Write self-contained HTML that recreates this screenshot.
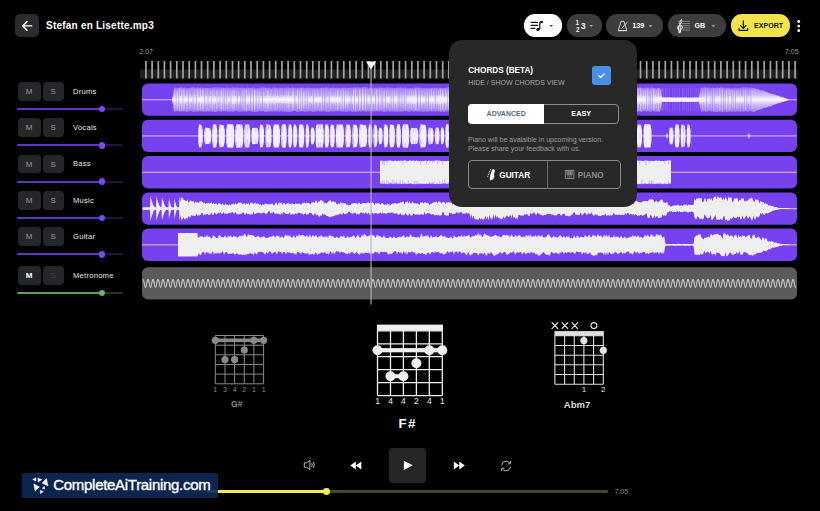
<!DOCTYPE html>
<html><head><meta charset="utf-8"><style>
*{margin:0;padding:0;box-sizing:border-box}
html,body{width:820px;height:511px;overflow:hidden;background:#000;font-family:"Liberation Sans",sans-serif}
.a{position:absolute}
.btn{position:absolute;height:18.7px;background:#24262a;border-radius:4px;color:#9a9a9a;font-size:8px;text-align:center;line-height:19px}
.lbl{position:absolute;left:73px;color:#e6e6e6;font-size:7.6px;letter-spacing:0.25px;line-height:9px}
.sl{position:absolute;left:16.7px;width:106.6px;height:2.2px;border-radius:1px}
.th{position:absolute;left:98.5px;width:6.8px;height:6.8px;border-radius:50%}
.tb{position:absolute;top:13.8px;height:23.2px;border-radius:11px;background:#3d3d3d}
.car{position:absolute;width:0;height:0;border-left:2px solid transparent;border-right:2px solid transparent;border-top:2.2px solid #aaa}
</style></head><body>
<svg class="a" style="left:0;top:0" width="820" height="511" viewBox="0 0 820 511">
<rect x="140" y="69.5" width="657.5" height="9" fill="#202020"/>
<path d="M145.9 61V78.5M152.1 61V78.5M158.3 61V78.5M164.4 61V78.5M170.6 61V78.5M176.8 61V78.5M183 61V78.5M189.2 61V78.5M195.4 61V78.5M201.5 61V78.5M207.7 61V78.5M213.9 61V78.5M220.1 61V78.5M226.3 61V78.5M232.5 61V78.5M238.6 61V78.5M244.8 61V78.5M251 61V78.5M257.2 61V78.5M263.4 61V78.5M269.6 61V78.5M275.7 61V78.5M281.9 61V78.5M288.1 61V78.5M294.3 61V78.5M300.5 61V78.5M306.7 61V78.5M312.8 61V78.5M319 61V78.5M325.2 61V78.5M331.4 61V78.5M337.6 61V78.5M343.8 61V78.5M349.9 61V78.5M356.1 61V78.5M362.3 61V78.5M368.5 61V78.5M374.7 61V78.5M380.8 61V78.5M387 61V78.5M393.2 61V78.5M399.4 61V78.5M405.6 61V78.5M411.8 61V78.5M417.9 61V78.5M424.1 61V78.5M430.3 61V78.5M436.5 61V78.5M442.7 61V78.5M448.9 61V78.5M455 61V78.5M461.2 61V78.5M467.4 61V78.5M473.6 61V78.5M479.8 61V78.5M486 61V78.5M492.1 61V78.5M498.3 61V78.5M504.5 61V78.5M510.7 61V78.5M516.9 61V78.5M523.1 61V78.5M529.2 61V78.5M535.4 61V78.5M541.6 61V78.5M547.8 61V78.5M554 61V78.5M560.2 61V78.5M566.3 61V78.5M572.5 61V78.5M578.7 61V78.5M584.9 61V78.5M591.1 61V78.5M597.2 61V78.5M603.4 61V78.5M609.6 61V78.5M615.8 61V78.5M622 61V78.5M628.2 61V78.5M634.3 61V78.5M640.5 61V78.5M646.7 61V78.5M652.9 61V78.5M659.1 61V78.5M665.3 61V78.5M671.4 61V78.5M677.6 61V78.5M683.8 61V78.5M690 61V78.5M696.2 61V78.5M702.4 61V78.5M708.5 61V78.5M714.7 61V78.5M720.9 61V78.5M727.1 61V78.5M733.3 61V78.5M739.5 61V78.5M745.6 61V78.5M751.8 61V78.5M758 61V78.5M764.2 61V78.5M770.4 61V78.5M776.6 61V78.5M782.7 61V78.5M788.9 61V78.5M795.1 61V78.5" stroke="#a4a4a4" stroke-width="1.7"/>
<rect x="142" y="83.5" width="655" height="32.3" rx="6" fill="#7641ef"/>
<rect x="142" y="99.1" width="655" height="1.2" fill="#c9a9ff"/>
<rect x="142" y="119.8" width="655" height="32.3" rx="6" fill="#7641ef"/>
<rect x="142" y="135.3" width="655" height="1.2" fill="#c9a9ff"/>
<rect x="142" y="156.1" width="655" height="32.3" rx="6" fill="#7641ef"/>
<rect x="142" y="171.7" width="655" height="1.2" fill="#c9a9ff"/>
<rect x="142" y="192.4" width="655" height="32.3" rx="6" fill="#7641ef"/>
<rect x="142" y="208" width="655" height="1.2" fill="#c9a9ff"/>
<rect x="142" y="228.6" width="655" height="32.3" rx="6" fill="#7641ef"/>
<rect x="142" y="244.2" width="655" height="1.2" fill="#c9a9ff"/>
<rect x="142" y="267.2" width="655" height="32.4" rx="6" fill="#5b5b5b"/>
<path d="M143 279.1 L143.5 279.9 L144 282 L144.5 284.6 L145 286.7 L145.5 287.5 L146 286.7 L146.5 284.6 L147 282 L147.5 279.9 L148 279.1 L148.5 279.9 L149 282 L149.5 284.6 L150 286.7 L150.5 287.5 L151 286.7 L151.5 284.6 L152 282 L152.5 279.9 L153 279.1 L153.5 279.9 L154 282 L154.5 284.6 L155 286.7 L155.5 287.5 L156 286.7 L156.5 284.6 L157 282 L157.5 279.9 L158 279.1 L158.5 279.9 L159 282 L159.5 284.6 L160 286.7 L160.5 287.5 L161 286.7 L161.5 284.6 L162 282 L162.5 279.9 L163 279.1 L163.5 279.9 L164 282 L164.5 284.6 L165 286.7 L165.5 287.5 L166 286.7 L166.5 284.6 L167 282 L167.5 279.9 L168 279.1 L168.5 279.9 L169 282 L169.5 284.6 L170 286.7 L170.5 287.5 L171 286.7 L171.5 284.6 L172 282 L172.5 279.9 L173 279.1 L173.5 279.9 L174 282 L174.5 284.6 L175 286.7 L175.5 287.5 L176 286.7 L176.5 284.6 L177 282 L177.5 279.9 L178 279.1 L178.5 279.9 L179 282 L179.5 284.6 L180 286.7 L180.5 287.5 L181 286.7 L181.5 284.6 L182 282 L182.5 279.9 L183 279.1 L183.5 279.9 L184 282 L184.5 284.6 L185 286.7 L185.5 287.5 L186 286.7 L186.5 284.6 L187 282 L187.5 279.9 L188 279.1 L188.5 279.9 L189 282 L189.5 284.6 L190 286.7 L190.5 287.5 L191 286.7 L191.5 284.6 L192 282 L192.5 279.9 L193 279.1 L193.5 279.9 L194 282 L194.5 284.6 L195 286.7 L195.5 287.5 L196 286.7 L196.5 284.6 L197 282 L197.5 279.9 L198 279.1 L198.5 279.9 L199 282 L199.5 284.6 L200 286.7 L200.5 287.5 L201 286.7 L201.5 284.6 L202 282 L202.5 279.9 L203 279.1 L203.5 279.9 L204 282 L204.5 284.6 L205 286.7 L205.5 287.5 L206 286.7 L206.5 284.6 L207 282 L207.5 279.9 L208 279.1 L208.5 279.9 L209 282 L209.5 284.6 L210 286.7 L210.5 287.5 L211 286.7 L211.5 284.6 L212 282 L212.5 279.9 L213 279.1 L213.5 279.9 L214 282 L214.5 284.6 L215 286.7 L215.5 287.5 L216 286.7 L216.5 284.6 L217 282 L217.5 279.9 L218 279.1 L218.5 279.9 L219 282 L219.5 284.6 L220 286.7 L220.5 287.5 L221 286.7 L221.5 284.6 L222 282 L222.5 279.9 L223 279.1 L223.5 279.9 L224 282 L224.5 284.6 L225 286.7 L225.5 287.5 L226 286.7 L226.5 284.6 L227 282 L227.5 279.9 L228 279.1 L228.5 279.9 L229 282 L229.5 284.6 L230 286.7 L230.5 287.5 L231 286.7 L231.5 284.6 L232 282 L232.5 279.9 L233 279.1 L233.5 279.9 L234 282 L234.5 284.6 L235 286.7 L235.5 287.5 L236 286.7 L236.5 284.6 L237 282 L237.5 279.9 L238 279.1 L238.5 279.9 L239 282 L239.5 284.6 L240 286.7 L240.5 287.5 L241 286.7 L241.5 284.6 L242 282 L242.5 279.9 L243 279.1 L243.5 279.9 L244 282 L244.5 284.6 L245 286.7 L245.5 287.5 L246 286.7 L246.5 284.6 L247 282 L247.5 279.9 L248 279.1 L248.5 279.9 L249 282 L249.5 284.6 L250 286.7 L250.5 287.5 L251 286.7 L251.5 284.6 L252 282 L252.5 279.9 L253 279.1 L253.5 279.9 L254 282 L254.5 284.6 L255 286.7 L255.5 287.5 L256 286.7 L256.5 284.6 L257 282 L257.5 279.9 L258 279.1 L258.5 279.9 L259 282 L259.5 284.6 L260 286.7 L260.5 287.5 L261 286.7 L261.5 284.6 L262 282 L262.5 279.9 L263 279.1 L263.5 279.9 L264 282 L264.5 284.6 L265 286.7 L265.5 287.5 L266 286.7 L266.5 284.6 L267 282 L267.5 279.9 L268 279.1 L268.5 279.9 L269 282 L269.5 284.6 L270 286.7 L270.5 287.5 L271 286.7 L271.5 284.6 L272 282 L272.5 279.9 L273 279.1 L273.5 279.9 L274 282 L274.5 284.6 L275 286.7 L275.5 287.5 L276 286.7 L276.5 284.6 L277 282 L277.5 279.9 L278 279.1 L278.5 279.9 L279 282 L279.5 284.6 L280 286.7 L280.5 287.5 L281 286.7 L281.5 284.6 L282 282 L282.5 279.9 L283 279.1 L283.5 279.9 L284 282 L284.5 284.6 L285 286.7 L285.5 287.5 L286 286.7 L286.5 284.6 L287 282 L287.5 279.9 L288 279.1 L288.5 279.9 L289 282 L289.5 284.6 L290 286.7 L290.5 287.5 L291 286.7 L291.5 284.6 L292 282 L292.5 279.9 L293 279.1 L293.5 279.9 L294 282 L294.5 284.6 L295 286.7 L295.5 287.5 L296 286.7 L296.5 284.6 L297 282 L297.5 279.9 L298 279.1 L298.5 279.9 L299 282 L299.5 284.6 L300 286.7 L300.5 287.5 L301 286.7 L301.5 284.6 L302 282 L302.5 279.9 L303 279.1 L303.5 279.9 L304 282 L304.5 284.6 L305 286.7 L305.5 287.5 L306 286.7 L306.5 284.6 L307 282 L307.5 279.9 L308 279.1 L308.5 279.9 L309 282 L309.5 284.6 L310 286.7 L310.5 287.5 L311 286.7 L311.5 284.6 L312 282 L312.5 279.9 L313 279.1 L313.5 279.9 L314 282 L314.5 284.6 L315 286.7 L315.5 287.5 L316 286.7 L316.5 284.6 L317 282 L317.5 279.9 L318 279.1 L318.5 279.9 L319 282 L319.5 284.6 L320 286.7 L320.5 287.5 L321 286.7 L321.5 284.6 L322 282 L322.5 279.9 L323 279.1 L323.5 279.9 L324 282 L324.5 284.6 L325 286.7 L325.5 287.5 L326 286.7 L326.5 284.6 L327 282 L327.5 279.9 L328 279.1 L328.5 279.9 L329 282 L329.5 284.6 L330 286.7 L330.5 287.5 L331 286.7 L331.5 284.6 L332 282 L332.5 279.9 L333 279.1 L333.5 279.9 L334 282 L334.5 284.6 L335 286.7 L335.5 287.5 L336 286.7 L336.5 284.6 L337 282 L337.5 279.9 L338 279.1 L338.5 279.9 L339 282 L339.5 284.6 L340 286.7 L340.5 287.5 L341 286.7 L341.5 284.6 L342 282 L342.5 279.9 L343 279.1 L343.5 279.9 L344 282 L344.5 284.6 L345 286.7 L345.5 287.5 L346 286.7 L346.5 284.6 L347 282 L347.5 279.9 L348 279.1 L348.5 279.9 L349 282 L349.5 284.6 L350 286.7 L350.5 287.5 L351 286.7 L351.5 284.6 L352 282 L352.5 279.9 L353 279.1 L353.5 279.9 L354 282 L354.5 284.6 L355 286.7 L355.5 287.5 L356 286.7 L356.5 284.6 L357 282 L357.5 279.9 L358 279.1 L358.5 279.9 L359 282 L359.5 284.6 L360 286.7 L360.5 287.5 L361 286.7 L361.5 284.6 L362 282 L362.5 279.9 L363 279.1 L363.5 279.9 L364 282 L364.5 284.6 L365 286.7 L365.5 287.5 L366 286.7 L366.5 284.6 L367 282 L367.5 279.9 L368 279.1 L368.5 279.9 L369 282 L369.5 284.6 L370 286.7 L370.5 287.5 L371 286.7 L371.5 284.6 L372 282 L372.5 279.9 L373 279.1 L373.5 279.9 L374 282 L374.5 284.6 L375 286.7 L375.5 287.5 L376 286.7 L376.5 284.6 L377 282 L377.5 279.9 L378 279.1 L378.5 279.9 L379 282 L379.5 284.6 L380 286.7 L380.5 287.5 L381 286.7 L381.5 284.6 L382 282 L382.5 279.9 L383 279.1 L383.5 279.9 L384 282 L384.5 284.6 L385 286.7 L385.5 287.5 L386 286.7 L386.5 284.6 L387 282 L387.5 279.9 L388 279.1 L388.5 279.9 L389 282 L389.5 284.6 L390 286.7 L390.5 287.5 L391 286.7 L391.5 284.6 L392 282 L392.5 279.9 L393 279.1 L393.5 279.9 L394 282 L394.5 284.6 L395 286.7 L395.5 287.5 L396 286.7 L396.5 284.6 L397 282 L397.5 279.9 L398 279.1 L398.5 279.9 L399 282 L399.5 284.6 L400 286.7 L400.5 287.5 L401 286.7 L401.5 284.6 L402 282 L402.5 279.9 L403 279.1 L403.5 279.9 L404 282 L404.5 284.6 L405 286.7 L405.5 287.5 L406 286.7 L406.5 284.6 L407 282 L407.5 279.9 L408 279.1 L408.5 279.9 L409 282 L409.5 284.6 L410 286.7 L410.5 287.5 L411 286.7 L411.5 284.6 L412 282 L412.5 279.9 L413 279.1 L413.5 279.9 L414 282 L414.5 284.6 L415 286.7 L415.5 287.5 L416 286.7 L416.5 284.6 L417 282 L417.5 279.9 L418 279.1 L418.5 279.9 L419 282 L419.5 284.6 L420 286.7 L420.5 287.5 L421 286.7 L421.5 284.6 L422 282 L422.5 279.9 L423 279.1 L423.5 279.9 L424 282 L424.5 284.6 L425 286.7 L425.5 287.5 L426 286.7 L426.5 284.6 L427 282 L427.5 279.9 L428 279.1 L428.5 279.9 L429 282 L429.5 284.6 L430 286.7 L430.5 287.5 L431 286.7 L431.5 284.6 L432 282 L432.5 279.9 L433 279.1 L433.5 279.9 L434 282 L434.5 284.6 L435 286.7 L435.5 287.5 L436 286.7 L436.5 284.6 L437 282 L437.5 279.9 L438 279.1 L438.5 279.9 L439 282 L439.5 284.6 L440 286.7 L440.5 287.5 L441 286.7 L441.5 284.6 L442 282 L442.5 279.9 L443 279.1 L443.5 279.9 L444 282 L444.5 284.6 L445 286.7 L445.5 287.5 L446 286.7 L446.5 284.6 L447 282 L447.5 279.9 L448 279.1 L448.5 279.9 L449 282 L449.5 284.6 L450 286.7 L450.5 287.5 L451 286.7 L451.5 284.6 L452 282 L452.5 279.9 L453 279.1 L453.5 279.9 L454 282 L454.5 284.6 L455 286.7 L455.5 287.5 L456 286.7 L456.5 284.6 L457 282 L457.5 279.9 L458 279.1 L458.5 279.9 L459 282 L459.5 284.6 L460 286.7 L460.5 287.5 L461 286.7 L461.5 284.6 L462 282 L462.5 279.9 L463 279.1 L463.5 279.9 L464 282 L464.5 284.6 L465 286.7 L465.5 287.5 L466 286.7 L466.5 284.6 L467 282 L467.5 279.9 L468 279.1 L468.5 279.9 L469 282 L469.5 284.6 L470 286.7 L470.5 287.5 L471 286.7 L471.5 284.6 L472 282 L472.5 279.9 L473 279.1 L473.5 279.9 L474 282 L474.5 284.6 L475 286.7 L475.5 287.5 L476 286.7 L476.5 284.6 L477 282 L477.5 279.9 L478 279.1 L478.5 279.9 L479 282 L479.5 284.6 L480 286.7 L480.5 287.5 L481 286.7 L481.5 284.6 L482 282 L482.5 279.9 L483 279.1 L483.5 279.9 L484 282 L484.5 284.6 L485 286.7 L485.5 287.5 L486 286.7 L486.5 284.6 L487 282 L487.5 279.9 L488 279.1 L488.5 279.9 L489 282 L489.5 284.6 L490 286.7 L490.5 287.5 L491 286.7 L491.5 284.6 L492 282 L492.5 279.9 L493 279.1 L493.5 279.9 L494 282 L494.5 284.6 L495 286.7 L495.5 287.5 L496 286.7 L496.5 284.6 L497 282 L497.5 279.9 L498 279.1 L498.5 279.9 L499 282 L499.5 284.6 L500 286.7 L500.5 287.5 L501 286.7 L501.5 284.6 L502 282 L502.5 279.9 L503 279.1 L503.5 279.9 L504 282 L504.5 284.6 L505 286.7 L505.5 287.5 L506 286.7 L506.5 284.6 L507 282 L507.5 279.9 L508 279.1 L508.5 279.9 L509 282 L509.5 284.6 L510 286.7 L510.5 287.5 L511 286.7 L511.5 284.6 L512 282 L512.5 279.9 L513 279.1 L513.5 279.9 L514 282 L514.5 284.6 L515 286.7 L515.5 287.5 L516 286.7 L516.5 284.6 L517 282 L517.5 279.9 L518 279.1 L518.5 279.9 L519 282 L519.5 284.6 L520 286.7 L520.5 287.5 L521 286.7 L521.5 284.6 L522 282 L522.5 279.9 L523 279.1 L523.5 279.9 L524 282 L524.5 284.6 L525 286.7 L525.5 287.5 L526 286.7 L526.5 284.6 L527 282 L527.5 279.9 L528 279.1 L528.5 279.9 L529 282 L529.5 284.6 L530 286.7 L530.5 287.5 L531 286.7 L531.5 284.6 L532 282 L532.5 279.9 L533 279.1 L533.5 279.9 L534 282 L534.5 284.6 L535 286.7 L535.5 287.5 L536 286.7 L536.5 284.6 L537 282 L537.5 279.9 L538 279.1 L538.5 279.9 L539 282 L539.5 284.6 L540 286.7 L540.5 287.5 L541 286.7 L541.5 284.6 L542 282 L542.5 279.9 L543 279.1 L543.5 279.9 L544 282 L544.5 284.6 L545 286.7 L545.5 287.5 L546 286.7 L546.5 284.6 L547 282 L547.5 279.9 L548 279.1 L548.5 279.9 L549 282 L549.5 284.6 L550 286.7 L550.5 287.5 L551 286.7 L551.5 284.6 L552 282 L552.5 279.9 L553 279.1 L553.5 279.9 L554 282 L554.5 284.6 L555 286.7 L555.5 287.5 L556 286.7 L556.5 284.6 L557 282 L557.5 279.9 L558 279.1 L558.5 279.9 L559 282 L559.5 284.6 L560 286.7 L560.5 287.5 L561 286.7 L561.5 284.6 L562 282 L562.5 279.9 L563 279.1 L563.5 279.9 L564 282 L564.5 284.6 L565 286.7 L565.5 287.5 L566 286.7 L566.5 284.6 L567 282 L567.5 279.9 L568 279.1 L568.5 279.9 L569 282 L569.5 284.6 L570 286.7 L570.5 287.5 L571 286.7 L571.5 284.6 L572 282 L572.5 279.9 L573 279.1 L573.5 279.9 L574 282 L574.5 284.6 L575 286.7 L575.5 287.5 L576 286.7 L576.5 284.6 L577 282 L577.5 279.9 L578 279.1 L578.5 279.9 L579 282 L579.5 284.6 L580 286.7 L580.5 287.5 L581 286.7 L581.5 284.6 L582 282 L582.5 279.9 L583 279.1 L583.5 279.9 L584 282 L584.5 284.6 L585 286.7 L585.5 287.5 L586 286.7 L586.5 284.6 L587 282 L587.5 279.9 L588 279.1 L588.5 279.9 L589 282 L589.5 284.6 L590 286.7 L590.5 287.5 L591 286.7 L591.5 284.6 L592 282 L592.5 279.9 L593 279.1 L593.5 279.9 L594 282 L594.5 284.6 L595 286.7 L595.5 287.5 L596 286.7 L596.5 284.6 L597 282 L597.5 279.9 L598 279.1 L598.5 279.9 L599 282 L599.5 284.6 L600 286.7 L600.5 287.5 L601 286.7 L601.5 284.6 L602 282 L602.5 279.9 L603 279.1 L603.5 279.9 L604 282 L604.5 284.6 L605 286.7 L605.5 287.5 L606 286.7 L606.5 284.6 L607 282 L607.5 279.9 L608 279.1 L608.5 279.9 L609 282 L609.5 284.6 L610 286.7 L610.5 287.5 L611 286.7 L611.5 284.6 L612 282 L612.5 279.9 L613 279.1 L613.5 279.9 L614 282 L614.5 284.6 L615 286.7 L615.5 287.5 L616 286.7 L616.5 284.6 L617 282 L617.5 279.9 L618 279.1 L618.5 279.9 L619 282 L619.5 284.6 L620 286.7 L620.5 287.5 L621 286.7 L621.5 284.6 L622 282 L622.5 279.9 L623 279.1 L623.5 279.9 L624 282 L624.5 284.6 L625 286.7 L625.5 287.5 L626 286.7 L626.5 284.6 L627 282 L627.5 279.9 L628 279.1 L628.5 279.9 L629 282 L629.5 284.6 L630 286.7 L630.5 287.5 L631 286.7 L631.5 284.6 L632 282 L632.5 279.9 L633 279.1 L633.5 279.9 L634 282 L634.5 284.6 L635 286.7 L635.5 287.5 L636 286.7 L636.5 284.6 L637 282 L637.5 279.9 L638 279.1 L638.5 279.9 L639 282 L639.5 284.6 L640 286.7 L640.5 287.5 L641 286.7 L641.5 284.6 L642 282 L642.5 279.9 L643 279.1 L643.5 279.9 L644 282 L644.5 284.6 L645 286.7 L645.5 287.5 L646 286.7 L646.5 284.6 L647 282 L647.5 279.9 L648 279.1 L648.5 279.9 L649 282 L649.5 284.6 L650 286.7 L650.5 287.5 L651 286.7 L651.5 284.6 L652 282 L652.5 279.9 L653 279.1 L653.5 279.9 L654 282 L654.5 284.6 L655 286.7 L655.5 287.5 L656 286.7 L656.5 284.6 L657 282 L657.5 279.9 L658 279.1 L658.5 279.9 L659 282 L659.5 284.6 L660 286.7 L660.5 287.5 L661 286.7 L661.5 284.6 L662 282 L662.5 279.9 L663 279.1 L663.5 279.9 L664 282 L664.5 284.6 L665 286.7 L665.5 287.5 L666 286.7 L666.5 284.6 L667 282 L667.5 279.9 L668 279.1 L668.5 279.9 L669 282 L669.5 284.6 L670 286.7 L670.5 287.5 L671 286.7 L671.5 284.6 L672 282 L672.5 279.9 L673 279.1 L673.5 279.9 L674 282 L674.5 284.6 L675 286.7 L675.5 287.5 L676 286.7 L676.5 284.6 L677 282 L677.5 279.9 L678 279.1 L678.5 279.9 L679 282 L679.5 284.6 L680 286.7 L680.5 287.5 L681 286.7 L681.5 284.6 L682 282 L682.5 279.9 L683 279.1 L683.5 279.9 L684 282 L684.5 284.6 L685 286.7 L685.5 287.5 L686 286.7 L686.5 284.6 L687 282 L687.5 279.9 L688 279.1 L688.5 279.9 L689 282 L689.5 284.6 L690 286.7 L690.5 287.5 L691 286.7 L691.5 284.6 L692 282 L692.5 279.9 L693 279.1 L693.5 279.9 L694 282 L694.5 284.6 L695 286.7 L695.5 287.5 L696 286.7 L696.5 284.6 L697 282 L697.5 279.9 L698 279.1 L698.5 279.9 L699 282 L699.5 284.6 L700 286.7 L700.5 287.5 L701 286.7 L701.5 284.6 L702 282 L702.5 279.9 L703 279.1 L703.5 279.9 L704 282 L704.5 284.6 L705 286.7 L705.5 287.5 L706 286.7 L706.5 284.6 L707 282 L707.5 279.9 L708 279.1 L708.5 279.9 L709 282 L709.5 284.6 L710 286.7 L710.5 287.5 L711 286.7 L711.5 284.6 L712 282 L712.5 279.9 L713 279.1 L713.5 279.9 L714 282 L714.5 284.6 L715 286.7 L715.5 287.5 L716 286.7 L716.5 284.6 L717 282 L717.5 279.9 L718 279.1 L718.5 279.9 L719 282 L719.5 284.6 L720 286.7 L720.5 287.5 L721 286.7 L721.5 284.6 L722 282 L722.5 279.9 L723 279.1 L723.5 279.9 L724 282 L724.5 284.6 L725 286.7 L725.5 287.5 L726 286.7 L726.5 284.6 L727 282 L727.5 279.9 L728 279.1 L728.5 279.9 L729 282 L729.5 284.6 L730 286.7 L730.5 287.5 L731 286.7 L731.5 284.6 L732 282 L732.5 279.9 L733 279.1 L733.5 279.9 L734 282 L734.5 284.6 L735 286.7 L735.5 287.5 L736 286.7 L736.5 284.6 L737 282 L737.5 279.9 L738 279.1 L738.5 279.9 L739 282 L739.5 284.6 L740 286.7 L740.5 287.5 L741 286.7 L741.5 284.6 L742 282 L742.5 279.9 L743 279.1 L743.5 279.9 L744 282 L744.5 284.6 L745 286.7 L745.5 287.5 L746 286.7 L746.5 284.6 L747 282 L747.5 279.9 L748 279.1 L748.5 279.9 L749 282 L749.5 284.6 L750 286.7 L750.5 287.5 L751 286.7 L751.5 284.6 L752 282 L752.5 279.9 L753 279.1 L753.5 279.9 L754 282 L754.5 284.6 L755 286.7 L755.5 287.5 L756 286.7 L756.5 284.6 L757 282 L757.5 279.9 L758 279.1 L758.5 279.9 L759 282 L759.5 284.6 L760 286.7 L760.5 287.5 L761 286.7 L761.5 284.6 L762 282 L762.5 279.9 L763 279.1 L763.5 279.9 L764 282 L764.5 284.6 L765 286.7 L765.5 287.5 L766 286.7 L766.5 284.6 L767 282 L767.5 279.9 L768 279.1 L768.5 279.9 L769 282 L769.5 284.6 L770 286.7 L770.5 287.5 L771 286.7 L771.5 284.6 L772 282 L772.5 279.9 L773 279.1 L773.5 279.9 L774 282 L774.5 284.6 L775 286.7 L775.5 287.5 L776 286.7 L776.5 284.6 L777 282 L777.5 279.9 L778 279.1 L778.5 279.9 L779 282 L779.5 284.6 L780 286.7 L780.5 287.5 L781 286.7 L781.5 284.6 L782 282 L782.5 279.9 L783 279.1 L783.5 279.9 L784 282 L784.5 284.6 L785 286.7 L785.5 287.5 L786 286.7 L786.5 284.6 L787 282 L787.5 279.9 L788 279.1 L788.5 279.9 L789 282 L789.5 284.6 L790 286.7 L790.5 287.5 L791 286.7 L791.5 284.6 L792 282 L792.5 279.9 L793 279.1 L793.5 279.9 L794 282 L794.5 284.6 L795 286.7 L795.5 287.5 L796 286.7" fill="none" stroke="#dedede" stroke-width="0.95"/>
<linearGradient id="dg" gradientUnits="userSpaceOnUse" x1="0" y1="87.7" x2="0" y2="111.7"><stop offset="0" stop-color="#a585f4"/><stop offset="0.28" stop-color="#cdb9fa"/><stop offset="0.5" stop-color="#fbf8ff"/><stop offset="0.72" stop-color="#cdb9fa"/><stop offset="1" stop-color="#a585f4"/></linearGradient>
<path d="M172 99.7 L173 94.3 L174 88.3 L175 87.4 L176 87.8 L177 88.6 L178 87.7 L179 87.4 L180 88.2 L181 87.1 L182 87.3 L183 88.5 L184 87.9 L185 87.2 L186 88.3 L187 88.4 L188 87.9 L189 88.1 L190 88.3 L191 87.3 L192 87.5 L193 87.2 L194 87.5 L195 87.7 L196 88.4 L197 87.4 L198 87.3 L199 88 L200 87.9 L201 87.1 L202 88.5 L203 87.5 L204 87.9 L205 87.8 L206 88.2 L207 87.8 L208 88.3 L209 88.1 L210 88.1 L211 88.1 L212 88.5 L213 87.5 L214 87.6 L215 87.3 L216 88 L217 87.2 L218 87.3 L219 88 L220 87.3 L221 88.5 L222 87.5 L223 87.4 L224 88.2 L225 88 L226 88.5 L227 87.3 L228 87.5 L229 88.2 L230 87.8 L231 88.5 L232 87.4 L233 87.3 L234 88 L235 87.4 L236 87.8 L237 87.5 L238 87.6 L239 88.5 L240 87.6 L241 87.7 L242 88 L243 87.3 L244 88.4 L245 88.5 L246 88.4 L247 87.6 L248 87.8 L249 87.9 L250 88.3 L251 88 L252 87.8 L253 87.6 L254 87.5 L255 88.5 L256 88.5 L257 88.3 L258 88.2 L259 88.1 L260 88 L261 87.3 L262 87.8 L263 87.2 L264 87.7 L265 87.5 L266 88.1 L267 87.8 L268 88.5 L269 87.2 L270 88.1 L271 88.4 L272 88.5 L273 87.5 L274 87.7 L275 87.6 L276 87.8 L277 88 L278 88.5 L279 88.2 L280 87.4 L281 87.9 L282 88 L283 87.7 L284 88.4 L285 87.9 L286 87.3 L287 87.7 L288 87.6 L289 87.6 L290 88.2 L291 88 L292 87.4 L293 87.2 L294 88.1 L295 88 L296 87.8 L297 88.1 L298 87.5 L299 88.4 L300 87.6 L301 88.1 L302 87.6 L303 87.2 L304 88.2 L305 88.3 L306 88.3 L307 88.2 L308 87.2 L309 87.9 L310 88.2 L311 88 L312 88.3 L313 88.5 L314 87.2 L315 88.5 L316 88.5 L317 87.6 L318 88.5 L319 88.4 L320 87.9 L321 88 L322 87.4 L323 87.8 L324 88.3 L325 87.8 L326 87.4 L327 87.2 L328 88.5 L329 88.4 L330 87.5 L331 88.3 L332 87.4 L333 87.7 L334 87.4 L335 88.2 L336 88.1 L337 87.3 L338 88.5 L339 87.6 L340 88.2 L341 88.5 L342 87.6 L343 88.3 L344 87.2 L345 88 L346 87.5 L347 88.4 L348 88.3 L349 88.1 L350 87.7 L351 87.6 L352 88.3 L353 87.4 L354 87.6 L355 87.5 L356 87.8 L357 87.2 L358 87.2 L359 87.4 L360 88.1 L361 87.7 L362 87.6 L363 87.2 L364 87.3 L365 87.1 L366 87.5 L367 87.3 L368 88.4 L369 88.3 L370 87.4 L371 88.4 L372 88 L373 88.5 L374 88.3 L375 87.2 L376 87.3 L377 88.4 L378 88 L379 87.5 L380 87.6 L381 87.9 L382 87.9 L383 87.8 L384 88.5 L385 87.7 L386 87.5 L387 87.2 L388 88 L389 87.6 L390 87.7 L391 88.3 L392 87.5 L393 87.9 L394 88 L395 87.9 L396 88 L397 87.7 L398 87.3 L399 88 L400 87.5 L401 87.2 L402 87.4 L403 88.4 L404 87.7 L405 87.4 L406 87.6 L407 88.2 L408 87.9 L409 88.2 L410 88.1 L411 88 L412 88.4 L413 87.6 L414 88.4 L415 87.6 L416 87.5 L417 87.9 L418 87.2 L419 87.7 L420 88 L421 87.5 L422 87.9 L423 88.2 L424 88.5 L425 87.9 L426 87.7 L427 88.4 L428 88.3 L429 88.1 L430 88.3 L431 88.3 L432 87.7 L433 88.2 L434 87.8 L435 88 L436 88.3 L437 87.8 L438 88.2 L439 88.4 L440 87.7 L441 87.8 L442 88.5 L443 88.1 L444 88.1 L445 88.5 L446 87.3 L447 87.7 L448 87.2 L449 87.2 L450 87.5 L451 88.3 L452 87.6 L453 88 L454 88.5 L455 88.4 L456 87.4 L457 88.3 L458 88.4 L459 87.9 L460 88 L461 88 L462 87.7 L463 87.8 L464 88.3 L465 88.1 L466 88.3 L467 88 L468 88.5 L469 87.3 L470 87.6 L471 87.6 L472 87.5 L473 88 L474 87.7 L475 87.6 L476 88.1 L477 87.4 L478 87.6 L479 87.6 L480 87.3 L481 87.1 L482 88 L483 88.3 L484 87.7 L485 88.2 L486 87.7 L487 87.4 L488 87.3 L489 87.2 L490 87.6 L491 87.2 L492 87.9 L493 88.1 L494 88 L495 88.6 L496 87.9 L497 88.5 L498 88.4 L499 88.1 L500 87.5 L501 88 L502 88.4 L503 87.6 L504 87.2 L505 87.7 L506 87.6 L507 88.4 L508 87.2 L509 87.7 L510 88.2 L511 88.6 L512 88.3 L513 88.3 L514 87.4 L515 87.7 L516 87.4 L517 87.7 L518 87.5 L519 87.2 L520 88.2 L521 88 L522 87.3 L523 87.5 L524 88.1 L525 87.9 L526 87.1 L527 87.2 L528 87.9 L529 87.4 L530 87.7 L531 87.3 L532 88.4 L533 87.9 L534 88.3 L535 88.4 L536 87.5 L537 88.1 L538 87.7 L539 88.5 L540 87.2 L541 87.7 L542 87.7 L543 87.9 L544 88.3 L545 87.5 L546 88.5 L547 88.3 L548 88.1 L549 88.1 L550 88.4 L551 88.5 L552 88.3 L553 88.1 L554 87.4 L555 87.9 L556 87.6 L557 87.7 L558 87.8 L559 87.7 L560 88.2 L561 87.2 L562 87.3 L563 87.5 L564 87.5 L565 87.8 L566 88.2 L567 87.6 L568 88.4 L569 87.2 L570 87.8 L571 87.8 L572 87.2 L573 88.2 L574 88 L575 87.6 L576 87.6 L577 88.5 L578 88 L579 87.6 L580 87.2 L581 87.3 L582 87.7 L583 88.5 L584 88 L585 88 L586 87.6 L587 88.2 L588 88.1 L589 88.2 L590 88.3 L591 87.5 L592 88.4 L593 87.4 L594 87.3 L595 88.3 L596 87.4 L597 88.5 L598 88.3 L599 87.6 L600 88 L601 88.1 L602 88.3 L603 88.3 L604 88.1 L605 88 L606 87.8 L607 87.9 L608 87.5 L609 87.5 L610 87.8 L611 88.1 L612 88.1 L613 88 L614 87.4 L615 87.3 L616 88 L617 88.5 L618 87.6 L619 87.9 L620 87.4 L621 87.5 L622 87.5 L623 88.1 L624 87.3 L625 88 L626 87.5 L627 87.9 L628 88.4 L629 87.6 L630 87.2 L631 87.4 L632 88.1 L633 88.2 L634 88.4 L635 87.2 L636 87.7 L637 87.2 L638 87.9 L639 87.5 L640 87.4 L641 87.2 L642 87.9 L643 88.2 L644 88.3 L645 87.5 L646 87.7 L647 87.5 L648 87.2 L649 88.4 L650 88.2 L651 87.3 L652 87.4 L653 87.9 L654 88.1 L655 87.9 L656 88.5 L657 88.4 L658 87.8 L659 88.1 L660 87.6 L661 92.5 L662 97.3 L663 97.3 L664 97.3 L665 97.3 L666 97.5 L667 97.3 L668 97.3 L669 97.2 L670 97.3 L671 97.3 L672 97.4 L673 97.4 L674 97.3 L675 97.4 L676 97.4 L677 97.4 L678 97.3 L679 97.4 L680 97.4 L681 97.2 L682 97.4 L683 97.3 L684 97.4 L685 97.3 L686 97.2 L687 97.4 L688 97.5 L689 97.4 L690 97.4 L691 97.4 L692 97.4 L693 97.4 L694 97.2 L695 97.3 L696 97.3 L697 97.3 L698 97.4 L699 97.3 L700 92.3 L701 87.6 L702 87.8 L703 87.8 L704 87.6 L705 87.3 L706 88.5 L707 87.2 L708 88 L709 87.2 L710 88.5 L711 87.9 L712 88.5 L713 87.5 L714 88.3 L715 87.9 L716 87.9 L717 87.8 L718 87.4 L719 87.9 L720 88 L721 87.3 L722 87.5 L723 87.8 L724 87.9 L725 88.4 L726 87.7 L727 87.8 L728 88 L729 87.4 L730 88.5 L731 88.6 L732 88.4 L733 88.3 L734 88.5 L735 87.6 L736 88.5 L737 88 L738 88.4 L739 88.4 L740 87.9 L741 88.4 L742 87.3 L743 87.5 L744 87.2 L745 87.6 L746 87.5 L747 87.7 L748 87.2 L749 88.4 L750 88.1 L751 87.5 L752 87.8 L753 88.1 L754 87.9 L755 88.7 L756 88.3 L757 89.4 L758 88.8 L759 89.2 L760 90.3 L761 90.4 L762 90.2 L763 90.4 L764 90.8 L765 91.4 L766 91.5 L767 92 L768 92.6 L769 93.1 L770 93.4 L771 93.7 L772 93.7 L773 94.4 L774 94.4 L775 94.5 L776 95.1 L777 95.5 L778 95.6 L779 96.1 L780 96.4 L781 96.7 L782 97.1 L783 97.3 L784 97.8 L785 98.1 L786 98.4 L787 98.7 L788 99 L789 99.7 L790 99.7 L790 99.7 L789 99.7 L788 100.3 L787 100.6 L786 100.9 L785 101.2 L784 101.6 L783 101.9 L782 102.2 L781 102.4 L780 102.8 L779 103.3 L778 103.3 L777 103.8 L776 104.1 L775 104.5 L774 104.6 L773 105.2 L772 105.5 L771 106.2 L770 106.4 L769 106.4 L768 106.8 L767 107.4 L766 107.7 L765 107.8 L764 107.8 L763 108.3 L762 109.2 L761 109.1 L760 109.9 L759 109.8 L758 109.9 L757 110.7 L756 110.7 L755 111.7 L754 112.1 L753 111.7 L752 111.4 L751 111.1 L750 111.3 L749 111 L748 111.9 L747 111.6 L746 111.2 L745 111.2 L744 111.5 L743 111.9 L742 111 L741 111.7 L740 111.6 L739 112 L738 110.8 L737 111.6 L736 111.6 L735 112.1 L734 111 L733 111.8 L732 111.8 L731 111.2 L730 111.7 L729 111.6 L728 111.7 L727 111.9 L726 111.9 L725 111.3 L724 112.1 L723 112.2 L722 112 L721 111.9 L720 110.9 L719 111.6 L718 111.8 L717 112.1 L716 111.9 L715 111.7 L714 111.7 L713 111.2 L712 111.2 L711 111.7 L710 111.1 L709 111.1 L708 111.1 L707 112.1 L706 111.4 L705 111.5 L704 111 L703 111.4 L702 111.9 L701 111.4 L700 106.4 L699 102 L698 101.8 L697 101.9 L696 101.9 L695 102 L694 101.9 L693 102 L692 102 L691 102 L690 101.9 L689 102.1 L688 101.9 L687 102.1 L686 102 L685 101.9 L684 102.1 L683 102 L682 101.8 L681 101.9 L680 101.9 L679 102 L678 102.1 L677 102 L676 101.9 L675 102 L674 102 L673 101.9 L672 102 L671 101.9 L670 102 L669 101.9 L668 102 L667 101.9 L666 101.9 L665 101.9 L664 101.8 L663 101.9 L662 101.8 L661 106.5 L660 112 L659 111.7 L658 111.6 L657 112.1 L656 111.5 L655 111.7 L654 111.3 L653 111.3 L652 111.1 L651 111.7 L650 112.1 L649 111.6 L648 111.1 L647 111.5 L646 111.6 L645 110.8 L644 111 L643 111.1 L642 111.3 L641 112.1 L640 111.3 L639 110.9 L638 112 L637 111.5 L636 111.5 L635 111 L634 111.5 L633 111.8 L632 111.1 L631 112.1 L630 111.4 L629 112 L628 111.1 L627 112.1 L626 111.1 L625 111.9 L624 111 L623 112.1 L622 111.3 L621 112.1 L620 111.3 L619 111.1 L618 111.1 L617 111.9 L616 111.7 L615 111.9 L614 111.8 L613 111.7 L612 110.9 L611 111.4 L610 111.1 L609 112.1 L608 111.3 L607 110.9 L606 111.9 L605 111.7 L604 110.9 L603 110.9 L602 111.5 L601 111.7 L600 112.1 L599 111.4 L598 111.6 L597 111 L596 111.4 L595 111.3 L594 111.6 L593 111.4 L592 112.1 L591 111.7 L590 111.6 L589 111.8 L588 111.9 L587 111 L586 112.1 L585 110.8 L584 111.2 L583 111.3 L582 112 L581 111.4 L580 111.6 L579 112.1 L578 111 L577 111.2 L576 111.4 L575 111.1 L574 111.7 L573 111.4 L572 111.8 L571 111.5 L570 111.7 L569 111 L568 111.2 L567 111.6 L566 112 L565 111.1 L564 111.3 L563 111.1 L562 110.9 L561 111.5 L560 111.7 L559 112.1 L558 111.8 L557 111.8 L556 111.2 L555 111.8 L554 111.7 L553 111.2 L552 111.1 L551 110.9 L550 111.5 L549 111.5 L548 111.1 L547 111.3 L546 112 L545 111.1 L544 111.2 L543 111.8 L542 111.3 L541 111.3 L540 111.4 L539 112.1 L538 111.6 L537 110.9 L536 110.8 L535 111.9 L534 111.5 L533 112 L532 111.8 L531 112 L530 112.1 L529 111 L528 111.7 L527 112 L526 110.9 L525 112 L524 111.2 L523 111.1 L522 111.8 L521 111.9 L520 111 L519 111.2 L518 110.9 L517 111 L516 111.9 L515 111.5 L514 111 L513 110.8 L512 111.2 L511 111.2 L510 111.9 L509 111.9 L508 111.2 L507 111.2 L506 111.9 L505 111.2 L504 111.1 L503 111.9 L502 111.2 L501 111.8 L500 111.3 L499 111.4 L498 111.5 L497 111.6 L496 111.8 L495 110.9 L494 110.9 L493 110.9 L492 111.7 L491 111.7 L490 111.5 L489 111.4 L488 111.9 L487 112 L486 111.8 L485 111.9 L484 111.1 L483 111.3 L482 112.1 L481 111.2 L480 111.1 L479 112.1 L478 111.8 L477 110.9 L476 112 L475 111.4 L474 111.9 L473 111.1 L472 111.5 L471 111.4 L470 111.1 L469 111.2 L468 111 L467 111 L466 112 L465 111.2 L464 111.4 L463 111.3 L462 111.4 L461 111.7 L460 112 L459 111.1 L458 111.7 L457 111.2 L456 111.8 L455 111.2 L454 111.1 L453 111.9 L452 111.7 L451 111.2 L450 111.5 L449 111.8 L448 110.9 L447 111 L446 111.8 L445 111.4 L444 111.9 L443 112 L442 111.2 L441 111.7 L440 111.9 L439 111 L438 111.6 L437 110.9 L436 111.7 L435 111.8 L434 110.9 L433 110.9 L432 111.9 L431 111 L430 110.8 L429 111.2 L428 111.9 L427 111.4 L426 111.6 L425 111.1 L424 111.7 L423 111.9 L422 111.5 L421 111.6 L420 111.2 L419 111.6 L418 111.3 L417 111.5 L416 111.6 L415 110.8 L414 112 L413 111.3 L412 110.8 L411 111 L410 111.7 L409 111.7 L408 111.8 L407 111 L406 111.2 L405 111.1 L404 110.9 L403 111.2 L402 112 L401 111 L400 111.9 L399 111.1 L398 111.8 L397 111.7 L396 111.6 L395 111.4 L394 111.9 L393 110.8 L392 111.9 L391 111.1 L390 112.2 L389 111.6 L388 110.7 L387 111.3 L386 111.8 L385 111.9 L384 111.9 L383 111.4 L382 111.1 L381 111.3 L380 111.1 L379 111.8 L378 111.6 L377 111.1 L376 111.5 L375 111.5 L374 110.9 L373 111.7 L372 111.6 L371 110.8 L370 111.3 L369 111.5 L368 111.3 L367 111.3 L366 111.8 L365 111.5 L364 111 L363 111.5 L362 111 L361 111.8 L360 111.6 L359 110.8 L358 112.1 L357 111.3 L356 112 L355 112 L354 111 L353 112 L352 111.9 L351 111.4 L350 111 L349 111.5 L348 110.8 L347 111.9 L346 111.5 L345 111.7 L344 111.5 L343 110.9 L342 111.7 L341 111.4 L340 110.8 L339 111 L338 111.5 L337 110.8 L336 111.6 L335 111.2 L334 111.2 L333 111.4 L332 111.6 L331 110.8 L330 111.8 L329 112 L328 111.6 L327 112 L326 111.9 L325 111.1 L324 111.3 L323 110.8 L322 111.9 L321 110.9 L320 112 L319 111.2 L318 111.5 L317 111.1 L316 111.6 L315 111.5 L314 111.7 L313 111.9 L312 112.1 L311 111.1 L310 111 L309 111.6 L308 111.4 L307 111.3 L306 111.6 L305 111.7 L304 111.9 L303 111.2 L302 111.1 L301 111.7 L300 111 L299 112.1 L298 111.4 L297 112.1 L296 110.9 L295 110.9 L294 111.2 L293 110.8 L292 112.1 L291 111.6 L290 112 L289 111.7 L288 112 L287 111.8 L286 111.8 L285 111.8 L284 111.4 L283 112.1 L282 111.4 L281 111.1 L280 111.8 L279 111.7 L278 111.4 L277 111.1 L276 111.3 L275 111.4 L274 110.8 L273 111.4 L272 111.9 L271 110.8 L270 112.1 L269 111.2 L268 111.9 L267 111.5 L266 111.7 L265 112.1 L264 111.5 L263 110.9 L262 111.5 L261 111.2 L260 111.2 L259 110.8 L258 111.7 L257 111.7 L256 111.8 L255 111.4 L254 111.9 L253 112 L252 110.8 L251 111.7 L250 111 L249 111.1 L248 111.2 L247 110.9 L246 112 L245 111.4 L244 110.9 L243 110.9 L242 112.1 L241 111.1 L240 111.9 L239 111.6 L238 112.1 L237 110.8 L236 111.1 L235 111.2 L234 111.6 L233 111.6 L232 111.9 L231 111 L230 111.8 L229 112.1 L228 111.4 L227 112.1 L226 111.2 L225 111 L224 111.2 L223 110.8 L222 111.4 L221 111.9 L220 111 L219 111.1 L218 111.4 L217 111.6 L216 112.1 L215 112.1 L214 111.7 L213 111.3 L212 111.9 L211 110.9 L210 111.6 L209 112.1 L208 111 L207 111.6 L206 111.6 L205 111.8 L204 111.4 L203 112.1 L202 110.9 L201 111.3 L200 111.3 L199 111.3 L198 112 L197 111 L196 111.4 L195 111.8 L194 111.8 L193 112 L192 111 L191 111.1 L190 110.8 L189 111.4 L188 111.5 L187 112.1 L186 111.9 L185 111.3 L184 110.9 L183 111.2 L182 111.6 L181 111.8 L180 110.8 L179 111.1 L178 110.8 L177 111.3 L176 111.1 L175 111.5 L174 111.9 L173 104.9 L172 99.7Z" fill="url(#dg)"/>
<path d="M176.9 90.7V108.6M179.3 87.9V111.4M181.7 89.5V109.8M183.8 88.6V110.7M194.3 89.8V109.5M197.3 89.4V109.9M200.2 89.9V109.4M202.5 89.6V109.7M207 88.3V111M211.1 90.9V108.4M212.7 88.8V110.5M216.3 90.2V109.1M217.8 90.6V108.7M221 90.3V109M223.8 88.1V111.2M227.6 90.5V108.8M232.1 90.5V108.8M234.1 89.8V109.5M242.9 89.5V109.8M244.9 88.1V111.2M246.7 89.2V110.1M254.4 90.2V109.1M259.8 91.1V108.2M266.1 88.1V111.2M267.7 90.7V108.6M277.9 91.2V108.1M287.9 91.2V108.1M292.6 89.5V109.8M297.5 90.4V108.9M299.6 90.8V108.5M301.4 88.3V111M303.8 91V108.3M321.6 88.4V110.9M326.9 88.4V110.9M337.5 90.1V109.2M343.1 90.9V108.4M345.3 91.2V108.1M353.4 89.9V109.4M355.6 88.5V110.8M359.6 89V110.3M362.5 89.4V109.9M365.2 89.4V109.9M371.4 88.3V111M376.2 89.1V110.2M381.9 90.8V108.5M386.5 91.3V108M388.1 90.8V108.5M394.3 90.8V108.5M396.3 90.8V108.5M405.3 89.4V109.9M411.6 89.5V109.8M414 90.7V108.6M415.2 89.1V110.2M421.4 90.6V108.7M431.4 88.8V110.5M433.4 91.3V108M438.3 90.2V109.1M440.3 88.9V110.4M442.6 89.8V109.5M445.5 89.1V110.2M446.9 91.4V107.9M448.2 90.4V108.9M450.2 89.1V110.2M452.4 88.7V110.6M454.3 88.2V111.1M456.9 90.1V109.2M461.5 89.8V109.5M466 90.5V108.8M468.8 90.1V109.2M472.7 89.9V109.4M477.9 90.5V108.8M484.6 89.7V109.6M486 88.8V110.5M488.4 91.1V108.2M491 89.2V110.1M496.9 89.7V109.6M500 91.1V108.2M501.5 89.9V109.4M506.3 89.9V109.4M507.9 87.9V111.4M509.3 89.4V109.9M515.5 89.6V109.7M517.6 89.2V110.1M522 89.8V109.5M523.7 91V108.3M525.7 89.6V109.7M528.1 90.9V108.4M533.4 88.5V110.8M534.8 89.6V109.7M536.8 88.4V110.9M539.3 91.3V108M543.8 91.2V108.1M548.9 89.5V109.8M552.6 89.5V109.8M554.7 88.7V110.6M557.6 88.9V110.4M560.1 91V108.3M561.7 90.2V109.1M568 88.7V110.6M571.6 89.6V109.7M574.8 90.1V109.2M576.3 89.2V110.1M581.8 91.3V108M587.2 90.4V108.9M593.3 89.3V110M600 88V111.3M601.9 89.6V109.7M614.4 90.3V109M621.9 89.1V110.2M626.8 91.4V107.9M633.5 91.1V108.2M638.1 88.4V110.9M640.3 88.2V111.1M643.1 89.8V109.5M645.1 90.6V108.7M647.6 89.4V109.9M650.3 89.6V109.7M653.6 89V110.3M655.9 91.1V108.2M658.2 88.2V111.1M661 89.2V110.1M710.2 91.3V108M713.6 88.1V111.2M719.7 88.3V111M722.3 88.4V110.9M726.3 90.3V109M729.1 89.3V110M730.8 90.6V108.7M732.7 90.9V108.4M734.3 91.3V108M736.5 90.7V108.6M738.1 90.8V108.5M743.7 89.8V109.5M745.4 89.4V109.9M751.8 90.3V109" stroke="#ffffff" stroke-width="0.8" opacity="0.55"/>
<path d="M662.2 88.2V111.2M663.6 88.2V111.2M665.5 88.2V111.2M666.9 88.2V111.2M669.4 88.2V111.2M672.4 88.2V111.2M674.7 88.2V111.2M677.2 88.2V111.2M679.5 88.2V111.2M682.5 88.2V111.2M684.1 88.2V111.2M686.4 88.2V111.2M688.4 88.2V111.2M690.5 88.2V111.2M692.3 88.2V111.2M694.9 88.2V111.2M696.8 88.2V111.2M698.7 88.2V111.2" stroke="#ffffff" stroke-width="0.8" opacity="0.17"/>
<path d="M173.3 91.9V97.4M173.3 101.9V107.4M176.2 87.4V112M178.7 87.4V112M180.6 87.4V95.9M180.6 103.4V112M183 87.4V112M185.4 87.4V96.1M185.4 103.2V112M188.3 87.4V112M191.3 87.4V96.8M191.3 102.5V112M193.1 87.4V112M194.7 87.4V95.1M194.7 104.2V112M196.3 87.4V112M199.1 87.4V96.8M199.1 102.5V112M201.8 87.4V96.1M201.8 103.2V112M204.7 87.4V112M206.4 87.4V95.7M206.4 103.6V112M208 87.4V112M209.9 87.4V96.2M209.9 103.1V112M211.7 87.4V112M213.1 87.4V95.4M213.1 103.9V112M215.6 87.4V96.6M215.6 102.7V112M217.1 87.4V112M218.6 87.4V96.6M218.6 102.7V112M220 87.4V112M223 87.4V112M224.6 87.4V112M226.9 87.4V112M228.9 87.4V96.7M228.9 102.6V112M231 87.4V112M233.2 87.4V95.3M233.2 104V112M235.6 87.4V95.8M235.6 103.5V112M237.2 87.4V112M239.3 87.4V95.9M239.3 103.4V112M240.7 87.4V112M242.3 87.4V112M244.1 87.4V112M245.6 87.4V112M247.7 87.4V95.2M247.7 104.1V112M250.6 87.4V112M253.5 87.4V112M256.2 87.4V112M259 87.4V112M260.9 87.4V96.3M260.9 103V112M262.5 87.4V112M265.1 87.4V96.3M265.1 103V112M266.6 87.4V95.3M266.6 104V112M269.5 87.4V95.7M269.5 103.6V112M272.3 87.4V95.9M272.3 103.4V112M274.1 87.4V95.2M274.1 104.1V112M276.8 87.4V96.2M276.8 103.1V112M278.5 87.4V96M278.5 103.3V112M280 87.4V96.3M280 103V112M282 87.4V95.5M282 103.8V112M283.6 87.4V96M283.6 103.3V112M285.1 87.4V95.6M285.1 103.7V112M287.3 87.4V95.8M287.3 103.5V112M290.1 87.4V95.9M290.1 103.4V112M291.9 87.4V95.3M291.9 104V112M294.9 87.4V112M296.3 87.4V95.9M296.3 103.4V112M298.6 87.4V112M300.7 87.4V112M302.7 87.4V112M305.1 87.4V112M307.2 87.4V112M309.9 87.4V96.6M309.9 102.7V112M311.5 87.4V95.8M311.5 103.5V112M313.4 87.4V112M316.3 87.4V96.6M316.3 102.7V112M319.2 87.4V96.5M319.2 102.8V112M320.8 87.4V96.5M320.8 102.8V112M322.4 87.4V112M324.4 87.4V112M326 87.4V112M327.4 87.4V96.8M327.4 102.5V112M329.2 87.4V112M332.2 87.4V96M332.2 103.3V112M334.3 87.4V95.5M334.3 103.8V112M336.4 87.4V96.6M336.4 102.7V112M339.3 87.4V95.9M339.3 103.4V112M342.2 87.4V112M344.5 87.4V112M346.6 87.4V94.9M346.6 104.4V112M349.5 87.4V96M349.5 103.3V112M351 87.4V112M352.4 87.4V95.3M352.4 104V112M354.4 87.4V112M356.7 87.4V96.2M356.7 103.1V112M358.6 87.4V112M361.4 87.4V112M364.3 87.4V112M366.8 87.4V112M369.1 87.4V95.2M369.1 104.1V112M370.7 87.4V95.2M370.7 104.1V112M373.3 87.4V95.5M373.3 103.8V112M375.6 87.4V112M378.3 87.4V112M381.2 87.4V112M382.7 87.4V112M385.6 87.4V112M387.2 87.4V96.7M387.2 102.6V112M388.9 87.4V96M388.9 103.3V112M391 87.4V112M393.7 87.4V112M395.6 87.4V95.7M395.6 103.6V112M398.1 87.4V112M399.8 87.4V112M402 87.4V112M404.2 87.4V112M405.9 87.4V112M408 87.4V95.5M408 103.8V112M410.9 87.4V95.9M410.9 103.4V112M412.8 87.4V95.3M412.8 104V112M414.5 87.4V95.5M414.5 103.8V112M417.5 87.4V112M420.4 87.4V112M421.9 87.4V95.4M421.9 103.9V112M423.9 87.4V96.5M423.9 102.8V112M426.1 87.4V112M428.5 87.4V112M430.7 87.4V95.9M430.7 103.4V112M432.8 87.4V96.1M432.8 103.2V112M435.2 87.4V112M437.5 87.4V95.6M437.5 103.7V112M439.1 87.4V95M439.1 104.3V112M441.7 87.4V95.5M441.7 103.8V112M444.6 87.4V96.8M444.6 102.5V112M446.1 87.4V95.5M446.1 103.8V112M447.6 87.4V112M449.3 87.4V112M451.6 87.4V112M453.4 87.4V112M455.9 87.4V96.1M455.9 103.2V112M458.6 87.4V112M460.9 87.4V95.5M460.9 103.8V112M462.6 87.4V96.3M462.6 103V112M465.1 87.4V95.7M465.1 103.6V112M467.8 87.4V112M470.5 87.4V112M472 87.4V112M474.5 87.4V95.6M474.5 103.7V112M477.1 87.4V112M479.1 87.4V112M480.9 87.4V112M483.9 87.4V96.6M483.9 102.7V112M485.4 87.4V112M487.6 87.4V112M490.3 87.4V112M493.2 87.4V112M496.2 87.4V96.5M496.2 102.8V112M498.9 87.4V95.3M498.9 104V112M500.5 87.4V95.7M500.5 103.6V112M503.4 87.4V95.2M503.4 104.1V112M505.3 87.4V112M507 87.4V112M508.7 87.4V112M510.4 87.4V95.9M510.4 103.4V112M513.2 87.4V95.2M513.2 104.1V112M514.9 87.4V95.9M514.9 103.4V112M516.6 87.4V112M518.1 87.4V112M521.1 87.4V95.5M521.1 103.8V112M522.6 87.4V112M525 87.4V112M527 87.4V96.6M527 102.7V112M529.6 87.4V95.3M529.6 104V112M532.4 87.4V95M532.4 104.3V112M534.1 87.4V95.5M534.1 103.8V112M535.8 87.4V96.4M535.8 102.9V112M538.3 87.4V95.1M538.3 104.2V112M540.3 87.4V95.6M540.3 103.7V112M542.7 87.4V95.2M542.7 104.1V112M545.6 87.4V112M547.8 87.4V112M549.9 87.4V112M551.8 87.4V94.9M551.8 104.4V112M553.7 87.4V96.3M553.7 103V112M556.5 87.4V112M558.9 87.4V95.1M558.9 104.2V112M560.9 87.4V95.5M560.9 103.8V112M563.1 87.4V95.9M563.1 103.4V112M564.5 87.4V95.8M564.5 103.5V112M566.9 87.4V112M569.1 87.4V112M570.9 87.4V95.9M570.9 103.4V112M573.8 87.4V112M575.3 87.4V112M578.3 87.4V95.7M578.3 103.6V112M580.8 87.4V112M582.7 87.4V95.3M582.7 104V112M585 87.4V112M586.4 87.4V96M586.4 103.3V112M588 87.4V96.1M588 103.2V112M590.8 87.4V95.3M590.8 104V112M592.3 87.4V95.2M592.3 104.1V112M595 87.4V112M596.6 87.4V112M599.1 87.4V112M601 87.4V96.3M601 103V112M602.8 87.4V112M604.8 87.4V95.1M604.8 104.2V112M607.4 87.4V112M609.3 87.4V95.4M609.3 103.9V112M611.3 87.4V112M613.7 87.4V112M616.2 87.4V95.8M616.2 103.5V112M619.1 87.4V96.6M619.1 102.7V112M620.9 87.4V112M622.9 87.4V112M625.6 87.4V95.4M625.6 103.9V112M628 87.4V112M630.2 87.4V112M632.8 87.4V95.6M632.8 103.7V112M634.5 87.4V96.6M634.5 102.7V112M637 87.4V96.5M637 102.8V112M639.5 87.4V95.2M639.5 104.1V112M642 87.4V96.7M642 102.6V112M644.2 87.4V95.7M644.2 103.6V112M646.6 87.4V112M649.1 87.4V112M650.6 87.4V112M652.6 87.4V112M655.3 87.4V95.1M655.3 104.2V112M657.2 87.4V96.4M657.2 102.9V112M660.1 87.8V96M660.1 103.3V111.5M701.4 87.4V96.5M701.4 102.8V112M703.9 87.4V96.6M703.9 102.7V112M706.6 87.4V112M709.2 87.4V95.3M709.2 104V112M710.7 87.4V112M712.5 87.4V112M714 87.4V112M716.1 87.4V95.8M716.1 103.5V112M718.7 87.4V96M718.7 103.3V112M721.2 87.4V112M723.4 87.4V112M725.2 87.4V112M728.1 87.4V112M730 87.4V96M730 103.3V112M731.7 87.4V112M733.2 87.4V112M735.4 87.4V112M737 87.4V96.7M737 102.6V112M738.9 87.4V96.4M738.9 102.9V112M741.6 87.4V95.6M741.6 103.7V112M743 87.4V96.8M743 102.5V112M744.7 87.4V112M746.9 87.4V112M748.7 87.4V95.5M748.7 103.8V112M751 87.4V112" stroke="#8a60f2" stroke-width="0.7" opacity="0.6"/>
<path d="M198.3 129.5L199.1 124.3L201.7 124.9L202.8 130.6V141.3L201.7 147L199.1 147.6L198.3 142.4ZM204.3 131.3L205.1 127.6L210.2 128.2L211.3 132.1V139.8L210.2 143.7L205.1 144.3L204.3 140.6ZM212.3 129.5L213.1 124.3L216.2 124.4L217.3 130.6V141.3L216.2 147.5L213.1 147.6L212.3 142.4ZM218.8 129.5L219.6 124.5L223.7 125.3L224.8 130.6V141.3L223.7 146.6L219.6 147.4L218.8 142.4ZM226.3 129.5L227.1 124.3L233.2 124.2L234.3 130.6V141.3L233.2 147.7L227.1 147.6L226.3 142.4ZM235.3 129.5L236.1 124.2L242.2 124.4L243.3 130.6V141.3L242.2 147.5L236.1 147.7L235.3 142.4ZM244.3 129.5L245.1 124.4L249.2 124.6L250.3 130.6V141.3L249.2 147.3L245.1 147.5L244.3 142.4ZM251.5 131.3L252.3 127.7L257.4 128L258.5 132.1V139.8L257.4 143.9L252.3 144.2L251.5 140.6ZM259.5 129.5L260.3 124.2L262.9 125.2L264 130.6V141.3L262.9 146.7L260.3 147.7L259.5 142.4ZM265.5 129.5L266.3 124.3L270.4 125L271.5 130.6V141.3L270.4 146.9L266.3 147.6L265.5 142.4ZM273 129.5L273.8 124.4L278.9 124.4L280 130.6V141.3L278.9 147.5L273.8 147.5L273 142.4ZM281.2 129.5L282 124.5L285.6 124.2L286.7 130.6V141.3L285.6 147.7L282 147.4L281.2 142.4ZM288.2 129.5L289 124.5L291.1 124.6L292.2 130.6V141.3L291.1 147.3L289 147.4L288.2 142.4ZM293.2 129.5L294 124.3L296.1 125L297.2 130.6V141.3L296.1 146.9L294 147.6L293.2 142.4ZM298.7 129.5L299.5 124.3L303.1 124.7L304.2 130.6V141.3L303.1 147.2L299.5 147.6L298.7 142.4ZM305.7 129.5L306.5 124.2L308.1 124.4L309.2 130.6V141.3L308.1 147.5L306.5 147.7L305.7 142.4ZM310.7 131.3L311.5 127.5L313.6 127.6L314.7 132.1V139.8L313.6 144.3L311.5 144.4L310.7 140.6ZM315.7 129.5L316.5 124.4L322.6 124.3L323.7 130.6V141.3L322.6 147.6L316.5 147.5L315.7 142.4ZM324.7 129.5L325.5 124.2L328.1 124.7L329.2 130.6V141.3L328.1 147.2L325.5 147.7L324.7 142.4ZM330.2 129.5L331 124.4L333.6 125L334.7 130.6V141.3L333.6 146.9L331 147.5L330.2 142.4ZM335.9 129.5L336.7 124.4L342.8 124.4L343.9 130.6V141.3L342.8 147.5L336.7 147.5L335.9 142.4ZM345.4 129.5L346.2 124.5L349.8 124.8L350.9 130.6V141.3L349.8 147.1L346.2 147.4L345.4 142.4ZM352.4 129.5L353.2 124.4L356.8 125L357.9 130.6V141.3L356.8 146.9L353.2 147.5L352.4 142.4ZM359.1 129.5L359.9 124.3L366 125.3L367.1 130.6V141.3L366 146.6L359.9 147.6L359.1 142.4ZM368.3 129.5L369.1 124.2L371.2 124.8L372.3 130.6V141.3L371.2 147.1L369.1 147.7L368.3 142.4ZM373.5 129.5L374.3 124.5L376.4 125.3L377.5 130.6V141.3L376.4 146.6L374.3 147.4L373.5 142.4ZM378.5 131.3L379.3 127.7L381.4 127.7L382.5 132.1V139.8L381.4 144.2L379.3 144.2L378.5 140.6ZM383.7 129.5L384.5 124.3L387.1 124.9L388.2 130.6V141.3L387.1 147L384.5 147.6L383.7 142.4ZM389.4 129.5L390.2 124.4L393.8 124.9L394.9 130.6V141.3L393.8 147L390.2 147.5L389.4 142.4ZM396.4 129.5L397.2 124.4L399.8 124.3L400.9 130.6V141.3L399.8 147.6L397.2 147.5L396.4 142.4ZM402.1 129.5L402.9 124.5L408 124.2L409.1 130.6V141.3L408 147.7L402.9 147.4L402.1 142.4ZM410.3 131.3L411.1 127.7L417.2 128.2L418.3 132.1V139.8L417.2 143.7L411.1 144.2L410.3 140.6ZM419.5 129.5L420.3 124.2L425.4 124.9L426.5 130.6V141.3L425.4 147L420.3 147.7L419.5 142.4ZM428 131.3L428.8 127.5L432.4 128.2L433.5 132.1V139.8L432.4 143.7L428.8 144.4L428 140.6ZM435 131.3L435.8 127.6L438.4 127.6L439.5 132.1V139.8L438.4 144.3L435.8 144.3L435 140.6ZM440.7 131.3L441.5 127.6L443.1 127.6L444.2 132.1V139.8L443.1 144.3L441.5 144.3L440.7 140.6ZM445.4 129.5L446.2 124.3L448.4 124.2L449.5 130.6V141.3L448.4 147.7L446.2 147.6L445.4 142.4ZM637 129.5L637.8 124.4L640.9 124.8L642 130.6V141.3L640.9 147.1L637.8 147.5L637 142.4ZM643.5 129.5L644.3 124.3L650.4 124.3L651.5 130.6V141.3L650.4 147.6L644.3 147.6L643.5 142.4ZM666.3 135L667 132.8L667.8 135V136.9L667 139.1L666.3 136.9ZM669.2 131.3L670 127.5L672.4 127.7L673.5 132.1V139.8L672.4 144.2L670 144.4L669.2 140.6ZM674.8 129.5L675.6 124.5L678.4 124.6L679.5 130.6V141.3L678.4 147.3L675.6 147.4L674.8 142.4ZM680.8 129.5L681.6 124.4L684.4 125.2L685.5 130.6V141.3L684.4 146.7L681.6 147.5L680.8 142.4ZM686.8 129.5L687.6 124.2L689.5 124.9L690.6 130.6V141.3L689.5 147L687.6 147.7L686.8 142.4ZM748.2 135L748.9 132.8L749.6 135V136.9L748.9 139.1L748.2 136.9Z" fill="#f2eefc"/>
<path d="M201.4 123.6V130.3M201.4 141.6V148.2M205.3 126.9V131.8M205.3 140.1V144.9M207.3 126.9V127.9M207.3 144V144.9M209.7 126.9V130.4M209.7 141.5V144.9M213.3 123.6V129.7M213.3 142.2V148.2M219.8 123.6V129.2M219.8 142.7V148.2M227.3 123.6V127.6M227.3 144.3V148.2M236.3 123.6V130.1M236.3 141.8V148.2M240.5 123.6V127M240.5 144.9V148.2M245.3 123.6V130.1M245.3 141.8V148.2M247.1 123.6V132.8M247.1 139.1V148.2M249.2 123.6V128.8M249.2 143.1V148.2M256 126.9V132.6M256 139.3V144.9M266.5 123.6V130.6M266.5 141.3V148.2M268.6 123.6V129.8M268.6 142.1V148.2M282.2 123.6V132M282.2 139.9V148.2M295.7 123.6V126M295.7 145.9V148.2M313.3 126.9V127.7M313.3 144.2V144.9M316.7 123.6V124.6M316.7 147.3V148.2M318.7 123.6V128.9M318.7 143V148.2M320.4 123.6V129.2M320.4 142.7V148.2M327.3 123.6V125.3M327.3 146.6V148.2M336.9 123.6V130M336.9 141.9V148.2M338.9 123.6V127.2M338.9 144.7V148.2M346.4 123.6V130.9M346.4 141V148.2M348.4 123.6V125.6M348.4 146.3V148.2M353.4 123.6V133.5M353.4 138.4V148.2M355.3 123.6V124.2M355.3 147.7V148.2M360.1 123.6V130.3M360.1 141.6V148.2M369.3 123.6V126.2M369.3 145.7V148.2M374.5 123.6V133.3M374.5 138.6V148.2M384.7 123.6V127.2M384.7 144.7V148.2M397.4 123.6V125.2M397.4 146.7V148.2M405.1 123.6V129.4M405.1 142.5V148.2M413.4 126.9V132.2M413.4 139.7V144.9M415.9 126.9V131.5M415.9 140.4V144.9M420.5 123.6V132.9M420.5 139V148.2M429 126.9V133.5M429 138.4V144.9M430.7 126.9V130.7M430.7 141.2V144.9M436 126.9V132.6M436 139.3V144.9M448.2 123.6V131.7M448.2 140.2V148.2M671.8 126.9V129.2M671.8 142.7V144.9M683.4 123.6V132.8M683.4 139.1V148.2M687.8 123.6V127.3M687.8 144.6V148.2" stroke="#9a74f4" stroke-width="0.7" opacity="0.6"/>
<path d="M380 160.9 L381 160.6 L382 160.7 L383 161.2 L384 161.2 L385 161.1 L386 160.8 L387 161.1 L388 160.6 L389 160.7 L390 160.3 L391 160.4 L392 161.1 L393 160.9 L394 161 L395 160.6 L396 160.7 L397 161.2 L398 160.6 L399 160.9 L400 160.8 L401 160.5 L402 161 L403 160.7 L404 160.5 L405 160.3 L406 160.8 L407 161.1 L408 161.2 L409 160.5 L410 160.4 L411 160.6 L412 160.7 L413 160.4 L414 160.8 L415 161.2 L416 160.6 L417 160.5 L418 160.9 L419 161.2 L420 161.1 L421 161.2 L422 161.1 L423 160.9 L424 161.1 L425 160.7 L426 160.5 L427 161 L428 160.9 L429 160.3 L430 161 L431 161 L432 160.7 L433 161.2 L434 160.9 L435 160.3 L436 160.7 L437 160.6 L438 160.4 L439 160.4 L440 160.8 L441 161.1 L442 161.2 L443 161 L444 160.9 L445 161.2 L446 161.1 L447 161.2 L448 160.6 L449 161 L450 160.9 L451 160.4 L452 160.8 L453 161.1 L454 160.9 L455 160.4 L456 161.2 L457 160.7 L458 160.7 L459 160.7 L460 160.4 L461 161 L462 161.1 L463 160.7 L464 160.9 L465 160.5 L466 160.4 L467 160.5 L468 161 L469 160.9 L470 161.2 L471 161 L472 160.3 L473 160.3 L474 160.3 L475 161 L476 161 L477 160.6 L478 160.4 L479 160.6 L480 161.1 L481 160.4 L482 160.5 L483 161 L484 160.9 L485 160.3 L486 160.8 L487 160.5 L488 161.1 L489 160.4 L490 161.1 L491 160.3 L492 160.9 L493 161.1 L494 160.3 L495 160.7 L496 160.8 L497 160.4 L498 161 L499 161 L500 161 L501 161.1 L502 160.9 L503 160.7 L504 160.8 L505 160.7 L506 160.7 L507 160.8 L508 161.2 L509 161.1 L510 160.5 L511 160.9 L512 160.7 L513 161.1 L514 161 L515 160.5 L516 160.7 L517 160.4 L518 160.6 L519 160.7 L520 160.8 L521 160.8 L522 160.6 L523 160.3 L524 160.7 L525 160.4 L526 161.1 L527 161.1 L528 161.1 L529 160.5 L530 161.1 L531 160.6 L532 160.4 L533 161 L534 160.8 L535 160.3 L536 161.1 L537 160.7 L538 161 L539 160.5 L540 160.7 L541 161.2 L542 160.6 L543 161.2 L544 160.5 L545 161.1 L546 161.2 L547 161 L548 160.8 L549 160.5 L550 161.1 L551 160.7 L552 161.1 L553 160.6 L554 161.1 L555 160.6 L556 161.1 L557 161.1 L558 160.8 L559 160.7 L560 161 L561 160.7 L562 161.1 L563 161.2 L564 160.9 L565 160.5 L566 160.7 L567 160.9 L568 161 L569 160.5 L570 161 L571 160.4 L572 160.5 L573 160.8 L574 160.8 L575 160.6 L576 160.9 L577 160.6 L578 160.8 L579 161.2 L580 161.1 L581 161 L582 161.1 L583 160.4 L584 161 L585 160.9 L586 161.1 L587 161 L588 160.3 L589 161 L590 160.9 L591 161.2 L592 160.8 L593 161 L594 161.2 L595 161.1 L596 161.2 L597 160.9 L598 160.7 L599 160.5 L600 160.6 L601 160.9 L602 160.3 L603 160.5 L604 161.2 L605 160.4 L606 160.5 L607 161.1 L608 160.7 L609 160.5 L610 160.7 L611 160.6 L612 161 L613 161.1 L614 161.1 L615 160.7 L616 160.6 L617 160.8 L618 160.5 L619 160.7 L620 160.6 L621 160.5 L622 161.1 L623 160.5 L624 160.5 L625 160.8 L626 160.8 L627 160.5 L628 160.6 L629 161.1 L630 160.5 L631 160.7 L632 161.2 L633 160.6 L634 160.6 L635 160.7 L636 160.8 L637 160.4 L638 160.3 L639 161.2 L640 160.5 L641 160.8 L642 161 L643 161 L644 161.1 L645 160.3 L646 160.5 L647 160.4 L648 161 L649 160.8 L650 161.2 L651 160.8 L652 161.1 L653 160.9 L654 161.2 L655 160.4 L656 160.4 L657 160.4 L658 160.9 L659 160.3 L660 160.9 L661 161 L662 161.1 L663 160.9 L664 161 L665 160.7 L666 160.9 L667 160.4 L668 160.6 L669 160.3 L670 160.5 L671 160.5 L671 183.7 L670 183.3 L669 183.8 L668 184.1 L667 184 L666 184.2 L665 183.5 L664 183.5 L663 184.2 L662 184.1 L661 183.3 L660 183.7 L659 183.8 L658 183.7 L657 183.6 L656 183.9 L655 183.4 L654 184 L653 184.1 L652 183.6 L651 183.6 L650 183.7 L649 183.3 L648 184.1 L647 183.9 L646 183.8 L645 183.4 L644 183.8 L643 183.8 L642 184.2 L641 183.5 L640 184.2 L639 183.7 L638 184.2 L637 183.5 L636 183.4 L635 183.7 L634 183.6 L633 183.9 L632 183.5 L631 183.3 L630 183.6 L629 183.5 L628 183.4 L627 183.9 L626 183.9 L625 183.6 L624 184.2 L623 183.5 L622 183.5 L621 183.5 L620 183.4 L619 183.8 L618 184 L617 183.3 L616 183.9 L615 183.9 L614 184.1 L613 183.6 L612 183.3 L611 183.9 L610 184.1 L609 184.1 L608 184.1 L607 183.8 L606 184 L605 183.9 L604 184.1 L603 183.9 L602 183.4 L601 183.6 L600 184.1 L599 183.9 L598 183.8 L597 183.5 L596 183.3 L595 183.7 L594 183.5 L593 183.8 L592 183.8 L591 183.6 L590 183.6 L589 184.2 L588 183.8 L587 184.2 L586 183.7 L585 183.7 L584 183.5 L583 183.9 L582 184.1 L581 183.4 L580 184 L579 183.4 L578 183.6 L577 183.9 L576 184.1 L575 184.2 L574 183.8 L573 184.1 L572 183.7 L571 183.4 L570 183.7 L569 183.8 L568 183.3 L567 183.3 L566 183.5 L565 183.6 L564 183.6 L563 183.5 L562 183.4 L561 183.5 L560 183.4 L559 184.1 L558 183.6 L557 184.1 L556 184.1 L555 184 L554 184.2 L553 183.7 L552 183.3 L551 183.9 L550 184.1 L549 183.5 L548 184.1 L547 183.4 L546 184 L545 183.5 L544 184.2 L543 184.2 L542 183.8 L541 183.6 L540 183.7 L539 183.3 L538 183.6 L537 183.6 L536 183.7 L535 184.1 L534 183.7 L533 184.2 L532 184.2 L531 183.4 L530 183.9 L529 184.1 L528 183.9 L527 183.5 L526 183.7 L525 183.4 L524 184.2 L523 183.5 L522 184.1 L521 184.2 L520 183.8 L519 183.9 L518 183.8 L517 183.7 L516 184 L515 183.8 L514 183.5 L513 183.8 L512 184 L511 183.8 L510 183.8 L509 183.7 L508 184 L507 183.5 L506 183.3 L505 183.8 L504 184.1 L503 184.1 L502 183.7 L501 184.1 L500 183.7 L499 183.8 L498 183.6 L497 183.5 L496 184.1 L495 184.1 L494 183.9 L493 183.3 L492 183.8 L491 183.9 L490 184.1 L489 184 L488 183.4 L487 183.4 L486 184.2 L485 183.7 L484 184 L483 184 L482 183.7 L481 184 L480 183.9 L479 184 L478 183.7 L477 184.1 L476 183.5 L475 183.5 L474 183.6 L473 184.2 L472 183.7 L471 183.9 L470 183.5 L469 183.3 L468 183.8 L467 184 L466 184 L465 184.2 L464 183.5 L463 184 L462 184 L461 183.6 L460 183.9 L459 184.2 L458 183.3 L457 183.4 L456 184.2 L455 183.4 L454 183.5 L453 183.4 L452 183.7 L451 184.2 L450 183.4 L449 183.6 L448 183.4 L447 184.1 L446 183.6 L445 183.4 L444 183.3 L443 183.4 L442 183.4 L441 183.9 L440 183.7 L439 184 L438 184 L437 183.3 L436 183.9 L435 183.9 L434 183.8 L433 183.7 L432 183.5 L431 183.7 L430 183.5 L429 183.4 L428 184.1 L427 183.7 L426 184.1 L425 184.1 L424 183.7 L423 184.1 L422 183.5 L421 184 L420 183.4 L419 183.7 L418 183.9 L417 183.6 L416 184.2 L415 183.9 L414 183.9 L413 184.2 L412 183.7 L411 183.8 L410 183.6 L409 183.8 L408 183.9 L407 183.7 L406 184 L405 183.4 L404 183.6 L403 184.1 L402 183.8 L401 183.9 L400 183.6 L399 183.8 L398 183.7 L397 183.5 L396 183.3 L395 183.6 L394 183.8 L393 184 L392 183.4 L391 183.6 L390 183.3 L389 183.7 L388 184.2 L387 183.5 L386 184.1 L385 183.4 L384 183.7 L383 183.8 L382 183.6 L381 183.4 L380 183.4Z" fill="#efefef"/>
<path d="M382.5 160.2V165.1M382.5 184.2V180.3M384.2 160.2V165.2M384.2 184.2V180.5M386.9 160.2V163.5M386.9 184.2V179.8M388.6 160.2V161.8M388.6 184.2V181.3M392.3 160.2V162.1M392.3 184.2V179.3M394 184.2V180.4M396.3 184.2V180.5M400.1 160.2V162.2M400.1 184.2V179.4M402.8 160.2V165.1M402.8 184.2V180.2M406.5 160.2V163M408.4 184.2V180.3M414.4 160.2V162.3M414.4 184.2V181M416.1 184.2V180.3M418.1 160.2V161.8M418.1 184.2V181.8M420.7 160.2V164.7M422.6 160.2V162.3M426.5 160.2V164.4M426.5 184.2V182.7M429.9 160.2V162.3M429.9 184.2V181.9M432.5 160.2V163.2M432.5 184.2V181.7M434.2 160.2V162.1M434.2 184.2V181.5M437.7 160.2V164.2M439.4 160.2V162.2M439.4 184.2V180.7M442.7 160.2V165.1M442.7 184.2V179.8M444.8 184.2V179.4M448.2 184.2V182.1M452.1 160.2V162M454.8 160.2V162.3M454.8 184.2V180.7M457.5 160.2V163.3M460.8 160.2V163.1M460.8 184.2V182M462.8 160.2V162.1M466 184.2V181.5M468.6 160.2V165.1M471.4 184.2V181.9M481.1 160.2V163.7M489.8 160.2V164.7M489.8 184.2V181.5M493.7 184.2V181.7M503.6 160.2V163.2M503.6 184.2V180.9M507.2 160.2V162M509.3 160.2V162.2M511.5 160.2V164.6M511.5 184.2V181.8M515.2 160.2V163M518.7 184.2V179.9M521.7 184.2V180M525.2 160.2V164M532.7 160.2V164.8M536.5 160.2V163.9M539.7 160.2V161.9M543.3 184.2V179.9M546.9 184.2V181.6M549.1 160.2V162.9M549.1 184.2V182.4M552.4 160.2V162.3M552.4 184.2V181.4M555 184.2V182M557.2 160.2V164.4M557.2 184.2V182.6M563 160.2V164.8M565.7 160.2V165M569.5 160.2V162.9M569.5 184.2V182.2M572.9 160.2V164.9M572.9 184.2V180.6M575.5 184.2V179.6M582 160.2V164.7M582 184.2V181.7M585.2 160.2V162.2M588 184.2V179.5M590.2 160.2V163.6M593.7 184.2V181.4M595.3 160.2V165.1M595.3 184.2V180.3M598.4 160.2V164.2M598.4 184.2V182.1M601.3 160.2V165.1M601.3 184.2V180.5M605.2 160.2V165.2M605.2 184.2V180.6M608.4 184.2V179.4M611.5 160.2V162.3M611.5 184.2V181.5M613.9 160.2V164.6M613.9 184.2V180.5M615.5 160.2V164.2M617.8 160.2V162.6M617.8 184.2V181.5M620.7 160.2V164M624.1 184.2V181.8M627.7 160.2V164.8M627.7 184.2V180.5M630.5 184.2V180.7M633.8 160.2V163.9M633.8 184.2V181.1M636.3 160.2V164.2M636.3 184.2V182.2M639.8 160.2V164.5M641.9 184.2V179.7M643.9 160.2V161.9M645.9 160.2V165.2M649.2 160.2V164M649.2 184.2V179.9M651.6 184.2V179.6M653.1 184.2V181M659.7 184.2V182.2M664.7 160.2V163.8M666.9 184.2V182.7M668.5 160.2V164.2M668.5 184.2V181.4" stroke="#b89cf5" stroke-width="0.8" opacity="0.8"/>
<path d="M143 207.3 L143.5 207.2 L144 207.2 L144.5 207.3 L145 207.2 L145.5 207.3 L146 207.3 L146.5 207.2 L147 207.2 L147.5 207.2 L148 207.3 L148.5 207.2 L149 207.3 L149.5 207.3 L150 207.3 L150.5 196 L151 198 L151.5 199.9 L152 201.2 L152.5 202.9 L153 204.4 L153.5 205.5 L154 206.3 L154.5 207 L155 207.2 L155.5 207.3 L156 207.2 L156.5 196 L157 198.7 L157.5 200 L158 202 L158.5 203.1 L159 204.7 L159.5 205.8 L160 206.5 L160.5 207.1 L161 207.3 L161.5 207.3 L162 197.2 L162.5 198.9 L163 200.1 L163.5 202.1 L164 203.5 L164.5 204.6 L165 205.8 L165.5 206.6 L166 207.1 L166.5 207.3 L167 207.3 L167.5 207.3 L168 207.3 L168.5 207.2 L169 197.9 L169.5 200.8 L170 202.6 L170.5 204.8 L171 206.1 L171.5 207.1 L172 207.2 L172.5 207.3 L173 207.3 L173.5 207.3 L174 207.3 L174.5 197.9 L175 200.8 L175.5 203 L176 204.7 L176.5 206.2 L177 207.1 L177.5 207.3 L178 207.3 L178.5 207.3 L179 207.2 L179.5 196.5 L180 198.2 L180.5 200.5 L181 202.6 L181.5 197.4 L182 196.8 L182 220.6 L181.5 220.5 L181 214.5 L180.5 216.6 L180 218.6 L179.5 221.1 L179 209.8 L178.5 209.8 L178 209.8 L177.5 209.8 L177 210 L176.5 210.9 L176 212.5 L175.5 214.2 L175 216.7 L174.5 219 L174 209.9 L173.5 209.9 L173 209.9 L172.5 209.8 L172 209.9 L171.5 210 L171 211 L170.5 212.3 L170 214.4 L169.5 216.3 L169 219.5 L168.5 209.8 L168 209.8 L167.5 209.9 L167 209.9 L166.5 209.8 L166 210 L165.5 210.5 L165 211.5 L164.5 212.5 L164 213.6 L163.5 215.3 L163 216.9 L162.5 218.2 L162 220.2 L161.5 209.9 L161 209.9 L160.5 210 L160 210.5 L159.5 211.3 L159 212.4 L158.5 213.9 L158 215.2 L157.5 216.8 L157 218.8 L156.5 220.5 L156 209.8 L155.5 209.8 L155 209.9 L154.5 210.1 L154 210.7 L153.5 211.5 L153 212.7 L152.5 214.2 L152 215.9 L151.5 217.1 L151 219.2 L150.5 221.2 L150 209.9 L149.5 209.8 L149 209.8 L148.5 209.8 L148 209.8 L147.5 209.9 L147 209.9 L146.5 209.8 L146 209.9 L145.5 209.8 L145 209.9 L144.5 209.9 L144 209.9 L143.5 209.8 L143 209.9Z" fill="#efefef"/>
<path d="M181.5 198 L182.5 197.7 L183.5 199.7 L184.5 200 L185.5 201.1 L186.5 201 L187.5 199.3 L188.5 202.9 L189.5 201.4 L190.5 200 L191.5 201.4 L192.5 201.6 L193.5 201.1 L194.5 203.6 L195.5 201.2 L196.5 202.7 L197.5 202 L198.5 202.9 L199.5 201.4 L200.5 201.3 L201.5 201.3 L202.5 201.9 L203.5 203 L204.5 202.2 L205.5 204.1 L206.5 203 L207.5 203.5 L208.5 202.6 L209.5 203.4 L210.5 203.1 L211.5 201.9 L212.5 204.3 L213.5 202.7 L214.5 204.2 L215.5 203.6 L216.5 203.5 L217.5 205.1 L218.5 203.1 L219.5 203.3 L220.5 203.9 L221.5 204.8 L222.5 203.3 L223.5 204.6 L224.5 205.5 L225.5 203 L226.5 204.7 L227.5 204.6 L228.5 205.5 L229.5 203.9 L230.5 205.7 L231.5 204.1 L232.5 204.1 L233.5 203.5 L234.5 204.5 L235.5 203 L236.5 204.5 L237.5 203.8 L238.5 202.4 L239.5 202.8 L240.5 202.8 L241.5 202.5 L242.5 204.4 L243.5 203.8 L244.5 202.7 L245.5 204.9 L246.5 203 L247.5 204.3 L248.5 202.6 L249.5 205.2 L250.5 202.7 L251.5 202.5 L252.5 203.2 L253.5 203.9 L254.5 202.4 L255.5 203 L256.5 204 L257.5 203.3 L258.5 203.5 L259.5 205 L260.5 204.1 L261.5 205.4 L262.5 204.2 L263.5 204.8 L264.5 204.4 L265.5 203.3 L266.5 203.9 L267.5 204.2 L268.5 204 L269.5 204.4 L270.5 204.2 L271.5 203.8 L272.5 203.4 L273.5 205.5 L274.5 204.9 L275.5 202.7 L276.5 202.8 L277.5 205 L278.5 202.9 L279.5 202.5 L280.5 202.9 L281.5 202.6 L282.5 205 L283.5 203.1 L284.5 203.1 L285.5 205.1 L286.5 203.5 L287.5 203.3 L288.5 203 L289.5 203.8 L290.5 203.7 L291.5 203.7 L292.5 203.4 L293.5 204.1 L294.5 204.6 L295.5 203.1 L296.5 203.9 L297.5 203.7 L298.5 203.5 L299.5 203.6 L300.5 204.5 L301.5 204.5 L302.5 202.8 L303.5 202.9 L304.5 202.6 L305.5 203.5 L306.5 202.2 L307.5 203.4 L308.5 202.4 L309.5 203.5 L310.5 204.6 L311.5 202.4 L312.5 202.2 L313.5 202.1 L314.5 203.2 L315.5 200.8 L316.5 200.6 L317.5 203.7 L318.5 200.9 L319.5 201.7 L320.5 200.1 L321.5 200.3 L322.5 201 L323.5 201.2 L324.5 203.6 L325.5 202.8 L326.5 203.7 L327.5 202.5 L328.5 201.6 L329.5 200.3 L330.5 200.3 L331.5 202.6 L332.5 201.2 L333.5 201.2 L334.5 202.4 L335.5 201.5 L336.5 203.8 L337.5 204.6 L338.5 203 L339.5 204.2 L340.5 202.4 L341.5 202.6 L342.5 203.7 L343.5 203 L344.5 203.4 L345.5 203 L346.5 204.7 L347.5 204.6 L348.5 205.5 L349.5 204.9 L350.5 205.2 L351.5 203.4 L352.5 203.5 L353.5 203.3 L354.5 203.1 L355.5 202.9 L356.5 203.3 L357.5 204.3 L358.5 202.7 L359.5 202.7 L360.5 203.9 L361.5 204 L362.5 203 L363.5 202.9 L364.5 202.9 L365.5 203.2 L366.5 203 L367.5 202.8 L368.5 202.5 L369.5 203.2 L370.5 202.4 L371.5 202.7 L372.5 202.3 L373.5 202.9 L374.5 205.4 L375.5 202.9 L376.5 203.4 L377.5 203.3 L378.5 203.1 L379.5 203.8 L380.5 204.9 L381.5 203 L382.5 203.1 L383.5 203.9 L384.5 205.3 L385.5 204 L386.5 205 L387.5 203.5 L388.5 204.1 L389.5 204.6 L390.5 205.6 L391.5 204.1 L392.5 203.5 L393.5 203.4 L394.5 203.4 L395.5 203.1 L396.5 203.8 L397.5 203.5 L398.5 203.1 L399.5 203.3 L400.5 202 L401.5 202.6 L402.5 201.7 L403.5 201.6 L404.5 204.8 L405.5 202.1 L406.5 201.9 L407.5 201 L408.5 203.7 L409.5 201 L410.5 203.5 L411.5 203.4 L412.5 201.3 L413.5 203.3 L414.5 203.5 L415.5 202.9 L416.5 203.8 L417.5 203.3 L418.5 204.5 L419.5 204.6 L420.5 202 L421.5 203.1 L422.5 202 L423.5 203.8 L424.5 202 L425.5 202.6 L426.5 203.2 L427.5 202.8 L428.5 203 L429.5 205.3 L430.5 203.6 L431.5 203.9 L432.5 202.4 L433.5 202.8 L434.5 202.1 L435.5 202.1 L436.5 201.2 L437.5 203.4 L438.5 201.6 L439.5 201.6 L440.5 201.9 L441.5 203.5 L442.5 202.2 L443.5 202.1 L444.5 202 L445.5 204.2 L446.5 202.1 L447.5 202.8 L448.5 202.1 L449.5 202.6 L450.5 202.4 L451.5 202.5 L452.5 204.7 L453.5 202.9 L454.5 203.1 L455.5 203.3 L456.5 205.6 L457.5 203.8 L458.5 203.7 L459.5 203.3 L460.5 203.6 L461.5 204.3 L462.5 203.3 L463.5 203.1 L464.5 203.6 L465.5 204.2 L466.5 204.1 L467.5 204.5 L468.5 203.6 L469.5 205.3 L470.5 199.6 L471.5 199.5 L472.5 199.7 L473.5 199.2 L474.5 199.6 L475.5 197.4 L476.5 197.7 L477.5 196.9 L478.5 197.6 L479.5 199.3 L480.5 198.1 L481.5 197.6 L482.5 198.2 L483.5 201.2 L484.5 197.5 L485.5 197.5 L486.5 198.4 L487.5 196.5 L488.5 201.4 L489.5 197.1 L490.5 197.2 L491.5 197.1 L492.5 198.2 L493.5 198.7 L494.5 198.2 L495.5 200.2 L496.5 198.6 L497.5 199.3 L498.5 199 L499.5 199.7 L500.5 198.1 L501.5 200.7 L502.5 202 L503.5 201 L504.5 200.6 L505.5 201.3 L506.5 200.7 L507.5 199.3 L508.5 199.7 L509.5 203.5 L510.5 200.4 L511.5 198.4 L512.5 198.2 L513.5 198.6 L514.5 198.1 L515.5 197.5 L516.5 202.2 L517.5 200.5 L518.5 204.2 L519.5 201.8 L520.5 202.5 L521.5 201.8 L522.5 204 L523.5 201.5 L524.5 201.8 L525.5 201 L526.5 200.7 L527.5 201 L528.5 201 L529.5 200.9 L530.5 201.2 L531.5 201.6 L532.5 201.5 L533.5 205 L534.5 203.3 L535.5 203 L536.5 202.9 L537.5 202.5 L538.5 202.1 L539.5 203.3 L540.5 202.1 L541.5 201.8 L542.5 202.1 L543.5 201.9 L544.5 202.1 L545.5 203.6 L546.5 204.9 L547.5 205.4 L548.5 203.5 L549.5 204.2 L550.5 202 L551.5 203.1 L552.5 202.5 L553.5 202.5 L554.5 204.3 L555.5 202.8 L556.5 201.1 L557.5 201.8 L558.5 203.8 L559.5 204.9 L560.5 201.2 L561.5 203.9 L562.5 201.3 L563.5 201.1 L564.5 201.6 L565.5 201.5 L566.5 203 L567.5 200.8 L568.5 200.4 L569.5 203.2 L570.5 201.8 L571.5 202.5 L572.5 201.9 L573.5 202.1 L574.5 202.4 L575.5 203.6 L576.5 202.1 L577.5 202.4 L578.5 202 L579.5 201.7 L580.5 203 L581.5 203.2 L582.5 202.3 L583.5 201.9 L584.5 202.6 L585.5 202.7 L586.5 203.1 L587.5 202.5 L588.5 203.5 L589.5 202.2 L590.5 202.6 L591.5 204.3 L592.5 203.4 L593.5 201.3 L594.5 200.9 L595.5 201.2 L596.5 201 L597.5 201 L598.5 201.2 L599.5 203.9 L600.5 202 L601.5 201.5 L602.5 201.6 L603.5 203.2 L604.5 201.2 L605.5 203.5 L606.5 204 L607.5 202.8 L608.5 200.6 L609.5 200.9 L610.5 201 L611.5 201.5 L612.5 201.4 L613.5 202.7 L614.5 202.3 L615.5 203.7 L616.5 202.7 L617.5 201.8 L618.5 202.7 L619.5 202.2 L620.5 203.3 L621.5 204.9 L622.5 202 L623.5 202.8 L624.5 202.5 L625.5 202.5 L626.5 204.4 L627.5 202.1 L628.5 202.3 L629.5 202 L630.5 202.4 L631.5 204.2 L632.5 203 L633.5 204.2 L634.5 202.8 L635.5 201.2 L636.5 200.8 L637.5 201.6 L638.5 201.9 L639.5 202 L640.5 202.4 L641.5 202.5 L642.5 201.6 L643.5 201.3 L644.5 201.3 L645.5 201 L646.5 201.1 L647.5 201.5 L648.5 200.5 L649.5 199.1 L650.5 199.4 L651.5 199.8 L652.5 198.8 L653.5 200 L654.5 202.6 L655.5 201.6 L656.5 200.5 L657.5 201.8 L658.5 202.4 L659.5 201 L660.5 200.1 L661.5 199.3 L662.5 199.9 L663.5 202.6 L664.5 202.4 L665.5 203.3 L666.5 202 L667.5 202.5 L668.5 205.7 L669.5 205 L670.5 206.4 L671.5 206.6 L672.5 205.5 L673.5 206.3 L674.5 205.1 L675.5 205 L676.5 205.4 L677.5 204.9 L678.5 204.8 L679.5 206.1 L680.5 205.8 L681.5 205.1 L682.5 206.3 L683.5 204.8 L684.5 204.7 L685.5 204.8 L686.5 204.6 L687.5 205.7 L688.5 204.4 L689.5 205 L690.5 204.6 L691.5 205 L692.5 205 L693.5 205 L694.5 198.6 L695.5 200.8 L696.5 198.5 L697.5 198.5 L698.5 198.6 L699.5 197.7 L700.5 198.7 L701.5 197.7 L702.5 202.2 L703.5 202 L704.5 198.3 L705.5 198.5 L706.5 202.7 L707.5 198.4 L708.5 199.2 L709.5 198 L710.5 200.1 L711.5 197.8 L712.5 201.2 L713.5 198.1 L714.5 197.1 L715.5 196 L716.5 199.5 L717.5 196.6 L718.5 196.7 L719.5 198.2 L720.5 197.3 L721.5 197.5 L722.5 200.5 L723.5 197.4 L724.5 200.5 L725.5 196.4 L726.5 198.8 L727.5 201.3 L728.5 196.6 L729.5 197.9 L730.5 197.2 L731.5 197.6 L732.5 202.6 L733.5 201.1 L734.5 197.9 L735.5 198.8 L736.5 197.9 L737.5 198.2 L738.5 201.9 L739.5 199.4 L740.5 200.8 L741.5 197.8 L742.5 199 L743.5 198.1 L744.5 202 L745.5 200.5 L746.5 201.1 L747.5 200.7 L748.5 199.8 L749.5 198.2 L750.5 198.9 L751.5 197.6 L752.5 198.5 L753.5 201.6 L754.5 201.9 L755.5 199.1 L756.5 199.8 L757.5 199.4 L758.5 200.3 L759.5 203.6 L760.5 200.9 L761.5 201.4 L762.5 202.2 L763.5 202.1 L764.5 203.9 L765.5 202.4 L766.5 204.2 L767.5 203.9 L768.5 205.7 L769.5 205.3 L770.5 205.4 L771.5 206 L772.5 206.1 L773.5 206.3 L774.5 207.3 L775.5 206.9 L776.5 207.1 L777.5 207.4 L778.5 207.9 L779.5 208 L780.5 208 L781.5 208.2 L782.5 208.2 L783.5 208.1 L784.5 208.1 L785.5 208 L786.5 208 L787.5 208.2 L788.5 208 L789.5 208 L789.5 209 L788.5 209.1 L787.5 209 L786.5 209.1 L785.5 209 L784.5 209 L783.5 209 L782.5 209.1 L781.5 209.1 L780.5 209.1 L779.5 209.1 L778.5 209.4 L777.5 209.7 L776.5 209.8 L775.5 210.2 L774.5 210.4 L773.5 210.6 L772.5 210.8 L771.5 211.6 L770.5 211.9 L769.5 212.5 L768.5 213 L767.5 213.5 L766.5 213.1 L765.5 213.3 L764.5 215 L763.5 214.5 L762.5 213 L761.5 214.3 L760.5 212.8 L759.5 216.2 L758.5 216.9 L757.5 217.4 L756.5 215.9 L755.5 219.3 L754.5 218.9 L753.5 215.4 L752.5 220.3 L751.5 220.2 L750.5 217.7 L749.5 216.2 L748.5 218.3 L747.5 217.9 L746.5 215.5 L745.5 216.7 L744.5 218.7 L743.5 219.3 L742.5 215.2 L741.5 219.3 L740.5 219.8 L739.5 216.3 L738.5 217.8 L737.5 216.5 L736.5 218.1 L735.5 218.1 L734.5 218 L733.5 216.3 L732.5 218.1 L731.5 218.9 L730.5 218.3 L729.5 220.4 L728.5 220.3 L727.5 221.3 L726.5 219.2 L725.5 220.5 L724.5 216.4 L723.5 216 L722.5 219.9 L721.5 219.8 L720.5 218.4 L719.5 219.9 L718.5 219.4 L717.5 219.7 L716.5 220.1 L715.5 214.8 L714.5 217 L713.5 218 L712.5 220 L711.5 219.9 L710.5 214.7 L709.5 218.1 L708.5 218.2 L707.5 218.2 L706.5 217.6 L705.5 215.4 L704.5 214.3 L703.5 219 L702.5 219.5 L701.5 218.5 L700.5 219 L699.5 218.8 L698.5 216.9 L697.5 215.9 L696.5 219 L695.5 219.2 L694.5 217 L693.5 211.9 L692.5 212 L691.5 211.2 L690.5 212.2 L689.5 211.8 L688.5 212.6 L687.5 212.5 L686.5 211.8 L685.5 211.8 L684.5 211.5 L683.5 211.4 L682.5 212.3 L681.5 211.9 L680.5 212.3 L679.5 211 L678.5 212.3 L677.5 210.8 L676.5 212 L675.5 212.1 L674.5 212 L673.5 211.4 L672.5 212.4 L671.5 210.9 L670.5 211.6 L669.5 211.3 L668.5 212 L667.5 212.3 L666.5 215 L665.5 216 L664.5 215.3 L663.5 215.8 L662.5 214.2 L661.5 217.5 L660.5 217.8 L659.5 217.8 L658.5 218.6 L657.5 216.5 L656.5 216.1 L655.5 218.1 L654.5 215.2 L653.5 217.5 L652.5 218.4 L651.5 215.7 L650.5 214.7 L649.5 217.8 L648.5 218.2 L647.5 217.6 L646.5 213.2 L645.5 213.9 L644.5 215 L643.5 215.6 L642.5 215.8 L641.5 215.1 L640.5 215 L639.5 215.8 L638.5 215.5 L637.5 215.9 L636.5 214.8 L635.5 214.2 L634.5 215.5 L633.5 214 L632.5 214.8 L631.5 214.3 L630.5 213.8 L629.5 215 L628.5 213.3 L627.5 212.8 L626.5 214.7 L625.5 213.1 L624.5 214.7 L623.5 214.9 L622.5 214.9 L621.5 214.8 L620.5 215.3 L619.5 214.6 L618.5 214.8 L617.5 215.1 L616.5 214.6 L615.5 214.7 L614.5 214.6 L613.5 212.6 L612.5 215.2 L611.5 215.5 L610.5 215.1 L609.5 215.9 L608.5 214.9 L607.5 215.6 L606.5 216 L605.5 213.6 L604.5 215.2 L603.5 215.2 L602.5 215 L601.5 215.7 L600.5 215.9 L599.5 215.7 L598.5 216.2 L597.5 214.6 L596.5 215.2 L595.5 214.1 L594.5 215.8 L593.5 215.6 L592.5 214.6 L591.5 212.2 L590.5 214 L589.5 214.3 L588.5 212.8 L587.5 214.6 L586.5 215 L585.5 213.3 L584.5 212.6 L583.5 213.9 L582.5 215.2 L581.5 214.6 L580.5 212.6 L579.5 215.3 L578.5 215.1 L577.5 214.8 L576.5 214.8 L575.5 214.8 L574.5 212.3 L573.5 212.7 L572.5 214.2 L571.5 215 L570.5 215.7 L569.5 216.3 L568.5 216.4 L567.5 215.6 L566.5 216 L565.5 216 L564.5 213.8 L563.5 213.8 L562.5 213.9 L561.5 215.7 L560.5 215.3 L559.5 213.6 L558.5 214 L557.5 213.9 L556.5 216.4 L555.5 214.8 L554.5 215.8 L553.5 214.9 L552.5 214.5 L551.5 214.7 L550.5 213.7 L549.5 214.3 L548.5 214.1 L547.5 213.7 L546.5 214.6 L545.5 214.9 L544.5 215 L543.5 215.5 L542.5 215.5 L541.5 214.9 L540.5 215 L539.5 213.8 L538.5 213.5 L537.5 212.6 L536.5 214.8 L535.5 214.7 L534.5 212.5 L533.5 212.6 L532.5 213.8 L531.5 214.2 L530.5 212.7 L529.5 216.1 L528.5 216 L527.5 214.5 L526.5 214.2 L525.5 215 L524.5 213.9 L523.5 216 L522.5 215.5 L521.5 215.4 L520.5 215.7 L519.5 214.8 L518.5 215.1 L517.5 219.5 L516.5 218 L515.5 218.7 L514.5 217.1 L513.5 218.2 L512.5 213.9 L511.5 218 L510.5 214.9 L509.5 216.2 L508.5 217.2 L507.5 216.1 L506.5 215.7 L505.5 217.2 L504.5 218.6 L503.5 216.5 L502.5 218.8 L501.5 219.2 L500.5 218.7 L499.5 218.2 L498.5 217.9 L497.5 216.2 L496.5 217.7 L495.5 214.7 L494.5 218.8 L493.5 214.5 L492.5 218.6 L491.5 219.2 L490.5 217.9 L489.5 214.9 L488.5 220.5 L487.5 216.3 L486.5 219.5 L485.5 215.8 L484.5 218.7 L483.5 219.6 L482.5 219.3 L481.5 218.2 L480.5 219.5 L479.5 217.2 L478.5 220 L477.5 219.4 L476.5 219.4 L475.5 219.5 L474.5 218.8 L473.5 215.5 L472.5 218.8 L471.5 214 L470.5 218.2 L469.5 213.3 L468.5 213.2 L467.5 213.4 L466.5 212.6 L465.5 213.6 L464.5 213.7 L463.5 213.3 L462.5 214.2 L461.5 211.8 L460.5 211.8 L459.5 212.7 L458.5 213.6 L457.5 212.7 L456.5 212 L455.5 213.7 L454.5 213.8 L453.5 214.1 L452.5 214.4 L451.5 212.8 L450.5 213.5 L449.5 212.2 L448.5 215.8 L447.5 215.6 L446.5 216 L445.5 215.1 L444.5 215.2 L443.5 212.1 L442.5 212.1 L441.5 215.3 L440.5 215.5 L439.5 215.8 L438.5 214.7 L437.5 215.5 L436.5 214.8 L435.5 215.5 L434.5 215.2 L433.5 214.5 L432.5 214 L431.5 214.4 L430.5 214.2 L429.5 212.7 L428.5 213.3 L427.5 213 L426.5 214.1 L425.5 214.8 L424.5 211.8 L423.5 214.9 L422.5 214.8 L421.5 214 L420.5 214.4 L419.5 214.7 L418.5 214.4 L417.5 214.5 L416.5 214.5 L415.5 214.7 L414.5 214.2 L413.5 213.2 L412.5 215.3 L411.5 215.8 L410.5 215.2 L409.5 213.2 L408.5 215.2 L407.5 215.6 L406.5 214.5 L405.5 213.3 L404.5 215.1 L403.5 215.3 L402.5 214.9 L401.5 215.2 L400.5 213.3 L399.5 214.3 L398.5 214.7 L397.5 214.5 L396.5 213.1 L395.5 213.4 L394.5 214.1 L393.5 213.6 L392.5 212.4 L391.5 212.6 L390.5 213.1 L389.5 212.5 L388.5 212.9 L387.5 212.9 L386.5 213.7 L385.5 213.7 L384.5 213 L383.5 213.8 L382.5 212.3 L381.5 214 L380.5 212.4 L379.5 213.1 L378.5 213.9 L377.5 213.5 L376.5 213.3 L375.5 213.1 L374.5 213.3 L373.5 214.5 L372.5 212.5 L371.5 213.1 L370.5 214.8 L369.5 214.7 L368.5 212.2 L367.5 214.1 L366.5 213.3 L365.5 212.2 L364.5 214.1 L363.5 212.7 L362.5 213.5 L361.5 212.5 L360.5 212.2 L359.5 214.3 L358.5 214.4 L357.5 213.6 L356.5 214.7 L355.5 213 L354.5 212.6 L353.5 213.8 L352.5 213.4 L351.5 213.3 L350.5 213 L349.5 211.5 L348.5 211.9 L347.5 213.3 L346.5 213.7 L345.5 214.1 L344.5 214.2 L343.5 212.5 L342.5 214.3 L341.5 214.5 L340.5 213.4 L339.5 214 L338.5 215 L337.5 214.5 L336.5 215.3 L335.5 215.3 L334.5 215.6 L333.5 216.3 L332.5 216.2 L331.5 216.7 L330.5 217 L329.5 217.2 L328.5 216.3 L327.5 216.1 L326.5 216.1 L325.5 214.5 L324.5 214.4 L323.5 215.1 L322.5 213.3 L321.5 216.2 L320.5 215.3 L319.5 216.9 L318.5 216.5 L317.5 214.2 L316.5 215.7 L315.5 213.4 L314.5 213.7 L313.5 215.4 L312.5 214.8 L311.5 212.7 L310.5 213 L309.5 212.7 L308.5 214.3 L307.5 214.5 L306.5 214.7 L305.5 213.1 L304.5 214.1 L303.5 214.9 L302.5 213.4 L301.5 213.6 L300.5 213.6 L299.5 212.4 L298.5 212.8 L297.5 213.6 L296.5 214.1 L295.5 213.2 L294.5 214.1 L293.5 214.8 L292.5 214.1 L291.5 214.5 L290.5 215.1 L289.5 212.2 L288.5 213.9 L287.5 214.3 L286.5 214.1 L285.5 213.4 L284.5 213.1 L283.5 211.7 L282.5 214.6 L281.5 212.9 L280.5 214.7 L279.5 214.2 L278.5 213.7 L277.5 214 L276.5 213.3 L275.5 214.1 L274.5 213.4 L273.5 211.5 L272.5 213 L271.5 213.1 L270.5 213.4 L269.5 211.1 L268.5 211.4 L267.5 213 L266.5 214.1 L265.5 213.9 L264.5 212.7 L263.5 213.1 L262.5 212.4 L261.5 214 L260.5 213.1 L259.5 212.9 L258.5 213.1 L257.5 212.7 L256.5 213.2 L255.5 213.7 L254.5 214.2 L253.5 212.1 L252.5 214.6 L251.5 214.2 L250.5 214.5 L249.5 214.4 L248.5 213.8 L247.5 214.3 L246.5 212.7 L245.5 214.4 L244.5 214.6 L243.5 212.2 L242.5 212.5 L241.5 213.7 L240.5 213.8 L239.5 214 L238.5 214.6 L237.5 214.3 L236.5 214.1 L235.5 211.8 L234.5 213.4 L233.5 213.6 L232.5 211.7 L231.5 212.4 L230.5 213.5 L229.5 212.7 L228.5 213 L227.5 214.1 L226.5 213.8 L225.5 213.3 L224.5 214 L223.5 211.9 L222.5 213.6 L221.5 213.9 L220.5 212.2 L219.5 213.5 L218.5 212.2 L217.5 213.8 L216.5 214.5 L215.5 213.6 L214.5 212.3 L213.5 214.8 L212.5 215.1 L211.5 212.6 L210.5 214.5 L209.5 215 L208.5 215.1 L207.5 213.7 L206.5 214.2 L205.5 214.7 L204.5 214.4 L203.5 215.4 L202.5 213 L201.5 212.6 L200.5 214.9 L199.5 215.5 L198.5 215 L197.5 216.1 L196.5 213.5 L195.5 215.9 L194.5 215.8 L193.5 215.7 L192.5 215.7 L191.5 215 L190.5 217 L189.5 217.3 L188.5 216.1 L187.5 219.1 L186.5 217.8 L185.5 219.2 L184.5 219.3 L183.5 217.2 L182.5 219.2 L181.5 218.4Z" fill="#efefef"/>
<path d="M178 233 L178.5 233 L179 233 L179.5 233.2 L180 232.9 L180.5 233 L181 233.1 L181.5 233 L182 233.2 L182.5 233.1 L183 233 L183.5 233 L184 233 L184.5 233.2 L185 233.1 L185.5 232.9 L186 233.1 L186.5 233 L187 233.1 L187.5 233 L188 233 L188.5 233.1 L189 233.1 L189.5 233.1 L190 233.2 L190.5 233.1 L191 233 L191.5 233.1 L192 233 L192.5 232.9 L193 233 L193.5 233.2 L194 233.1 L194.5 233.2 L195 233.1 L195.5 233.1 L196 232.9 L196.5 233.1 L197 233 L197.5 233.6 L197.5 256 L197 256.5 L196.5 256.4 L196 256.6 L195.5 256.5 L195 256.6 L194.5 256.3 L194 256.5 L193.5 256.5 L193 256.5 L192.5 256.3 L192 256.3 L191.5 256.4 L191 256.4 L190.5 256.4 L190 256.5 L189.5 256.5 L189 256.3 L188.5 256.4 L188 256.4 L187.5 256.6 L187 256.6 L186.5 256.5 L186 256.6 L185.5 256.5 L185 256.4 L184.5 256.5 L184 256.4 L183.5 256.4 L183 256.4 L182.5 256.5 L182 256.4 L181.5 256.5 L181 256.4 L180.5 256.4 L180 256.5 L179.5 256.4 L179 256.5 L178.5 256.6 L178 256.5Z" fill="#efefef"/>
<path d="M197 234.3 L198 237.7 L199 237.6 L200 235.8 L201 236.9 L202 236.1 L203 237.1 L204 237.8 L205 235.7 L206 237.7 L207 234.5 L208 237 L209 236.3 L210 236.9 L211 238.2 L212 238.3 L213 235.5 L214 236 L215 236.4 L216 238.2 L217 238.1 L218 237.7 L219 234.9 L220 235 L221 237 L222 237.1 L223 237.3 L224 237.4 L225 235 L226 236.9 L227 238.1 L228 235.6 L229 237.2 L230 235.5 L231 236 L232 237.1 L233 237.3 L234 235.3 L235 237.2 L236 235.7 L237 237.9 L238 237.2 L239 236.3 L240 235.5 L241 236.7 L242 235 L243 236.6 L244 234.3 L245 233.7 L246 235.9 L247 237.2 L248 233.9 L249 235.1 L250 234.9 L251 234.7 L252 235.3 L253 235.5 L254 235.4 L255 237.7 L256 236.4 L257 237.2 L258 235.6 L259 236.4 L260 237.8 L261 237.1 L262 237.5 L263 236.6 L264 236.1 L265 237.5 L266 238.2 L267 237.5 L268 238 L269 237.3 L270 236.4 L271 236.7 L272 236.6 L273 235.6 L274 235.7 L275 237.5 L276 236.6 L277 235.1 L278 236.6 L279 235.4 L280 238.2 L281 236.5 L282 236.4 L283 237.4 L284 237.8 L285 234.8 L286 234.8 L287 236.4 L288 234.6 L289 237 L290 234.5 L291 237.3 L292 237.8 L293 236.6 L294 235.1 L295 237.9 L296 237.1 L297 235 L298 237.1 L299 233.8 L300 235.6 L301 235.4 L302 234.9 L303 234.8 L304 235.8 L305 236.8 L306 236.1 L307 234.8 L308 237.5 L309 236.1 L310 234.2 L311 237.6 L312 236.3 L313 235.1 L314 236.2 L315 236.6 L316 234.6 L317 237 L318 237.7 L319 235.5 L320 237.2 L321 234.6 L322 236.6 L323 236.6 L324 237.8 L325 235.4 L326 237.7 L327 235.6 L328 238.3 L329 234.8 L330 236.1 L331 235.5 L332 236.4 L333 236.1 L334 237.7 L335 238.1 L336 237.3 L337 236.5 L338 238.2 L339 238.3 L340 236.7 L341 235.4 L342 237.1 L343 236.5 L344 234.9 L345 238.2 L346 237.9 L347 236.6 L348 236.4 L349 237.4 L350 237.4 L351 236.4 L352 237.4 L353 235.3 L354 235.4 L355 237.7 L356 237.6 L357 235.7 L358 234.4 L359 236.8 L360 237.6 L361 237.5 L362 233.8 L363 237 L364 233.7 L365 234.5 L366 235.4 L367 237 L368 235.5 L369 236.5 L370 234.5 L371 234.7 L372 234.5 L373 235.7 L374 235.1 L375 237.6 L376 237.4 L377 234.6 L378 235.2 L379 236.5 L380 236 L381 236.7 L382 237.8 L383 237.1 L384 235.1 L385 237.6 L386 237.9 L387 237.8 L388 238.3 L389 237.4 L390 236.2 L391 237.1 L392 238.2 L393 237.7 L394 236.1 L395 238 L396 237.9 L397 237.3 L398 237.5 L399 237.1 L400 236 L401 238 L402 236.1 L403 236.2 L404 234.7 L405 238.1 L406 237 L407 236.4 L408 236.5 L409 237.8 L410 234.6 L411 234.4 L412 237.3 L413 236.7 L414 237.1 L415 236.9 L416 237.7 L417 237.3 L418 236.4 L419 237.5 L420 237.4 L421 234 L422 234.3 L423 237.6 L424 236 L425 236.5 L426 234.9 L427 236.7 L428 234.5 L429 237.4 L430 237.5 L431 234.7 L432 237.5 L433 237.2 L434 236.5 L435 237.2 L436 235.5 L437 237.5 L438 236.9 L439 236.8 L440 235.5 L441 234.9 L442 235.6 L443 237 L444 236.2 L445 235.9 L446 237.7 L447 237.3 L448 238.3 L449 237.8 L450 237.7 L451 235.9 L452 238.4 L453 238.2 L454 235.5 L455 236.6 L456 237.2 L457 237.6 L458 236.6 L459 236 L460 236.7 L461 236 L462 234.9 L463 238 L464 234.9 L465 236.9 L466 235.4 L467 236.4 L468 235.6 L469 234.5 L470 237.4 L471 237.4 L472 235.8 L473 236.2 L474 236.6 L475 235.3 L476 234.4 L477 236.2 L478 233.1 L479 233.8 L480 235.9 L481 233.9 L482 237.1 L483 237 L484 233.5 L485 234.1 L486 234.7 L487 235 L488 236.1 L489 235.6 L490 236.9 L491 236.5 L492 236.5 L493 235.9 L494 236.3 L495 234.5 L496 235.1 L497 235.9 L498 236.7 L499 235.4 L500 237 L501 237.7 L502 236 L503 235.5 L504 234.5 L505 235.5 L506 235.4 L507 234.5 L508 235.8 L509 235.6 L510 237.6 L511 234.9 L512 234.5 L513 237 L514 237 L515 235.9 L516 234.7 L517 236.9 L518 235.7 L519 235.5 L520 234.6 L521 237.4 L522 236.2 L523 237.8 L524 235.5 L525 238 L526 235 L527 235.4 L528 236.7 L529 234.5 L530 237.1 L531 234 L532 237.7 L533 235.8 L534 237.2 L535 235.6 L536 235.2 L537 237.5 L538 234.4 L539 236.7 L540 235.3 L541 237 L542 234.4 L543 237.4 L544 237.3 L545 237.3 L546 237.4 L547 235 L548 234.7 L549 234.2 L550 235.7 L551 237.6 L552 237.8 L553 236.8 L554 235.6 L555 237.9 L556 236.3 L557 237.9 L558 237.1 L559 236.7 L560 234.8 L561 235.7 L562 237.6 L563 236.9 L564 235.9 L565 237.4 L566 237 L567 235.8 L568 237.7 L569 235.6 L570 238.4 L571 237.9 L572 238.3 L573 238.2 L574 234.9 L575 237.3 L576 238.2 L577 235.6 L578 235.7 L579 238.2 L580 236.9 L581 236.6 L582 237.6 L583 236.8 L584 237.9 L585 234.4 L586 236.3 L587 236.7 L588 236.5 L589 234.4 L590 235.6 L591 237.7 L592 236.4 L593 234.6 L594 236.5 L595 234.8 L596 237.3 L597 236.3 L598 233.6 L599 236.3 L600 236.1 L601 235.2 L602 237.2 L603 237.5 L604 234.2 L605 237.2 L606 234.6 L607 235.7 L608 237.2 L609 234.2 L610 237.4 L611 237.2 L612 236.9 L613 237.7 L614 234.4 L615 237.9 L616 236 L617 237.2 L618 236.4 L619 237.7 L620 237.6 L621 235.9 L622 237 L623 238.4 L624 237.2 L625 236.5 L626 238.3 L627 238.4 L628 237.6 L629 237.7 L630 236.4 L631 237.4 L632 236.1 L633 235 L634 237.6 L635 235 L636 237 L637 236.7 L638 234.9 L639 236.5 L640 237.9 L641 236.6 L642 237.6 L643 237.9 L644 237 L645 234.2 L646 237.1 L647 235.2 L648 234.7 L649 236.6 L650 237.1 L651 234.3 L652 234.2 L653 237.3 L654 234.9 L655 237.6 L656 234.5 L657 234.2 L658 235.6 L659 235 L660 235.5 L661 233.9 L662 237.5 L663 237.5 L664 236.2 L665 243.9 L665 245.5 L664 254.1 L663 252 L662 254.3 L661 252.1 L660 252.5 L659 254 L658 252.2 L657 252 L656 253.5 L655 252 L654 253.8 L653 252 L652 252.3 L651 253.2 L650 252.5 L649 253.9 L648 253.8 L647 252.4 L646 254.5 L645 252.3 L644 251.9 L643 251.7 L642 252.8 L641 253.2 L640 252.3 L639 254.2 L638 252 L637 252.3 L636 253.6 L635 251.3 L634 251.5 L633 254.6 L632 254.4 L631 252.6 L630 254.3 L629 252.3 L628 251.1 L627 252.1 L626 252.5 L625 253.7 L624 252.6 L623 253.7 L622 253.4 L621 251.4 L620 252.9 L619 253 L618 254.8 L617 252.7 L616 252.4 L615 251.6 L614 253.9 L613 253.1 L612 254.3 L611 254.3 L610 252.9 L609 251.7 L608 255.3 L607 252.1 L606 255.6 L605 251.9 L604 255.3 L603 253 L602 253.3 L601 252.2 L600 252.7 L599 252.7 L598 252.5 L597 255.8 L596 254.8 L595 255.3 L594 255.9 L593 255.4 L592 255.1 L591 254.6 L590 251.8 L589 253.9 L588 253.6 L587 254.4 L586 251.6 L585 253.9 L584 252.2 L583 252.8 L582 255 L581 251.4 L580 252.4 L579 251.9 L578 252.2 L577 251.2 L576 252.1 L575 254.4 L574 252.7 L573 252.4 L572 251.7 L571 253.2 L570 252.2 L569 252.6 L568 251.9 L567 252.8 L566 253.3 L565 251.8 L564 254.4 L563 252.1 L562 251.4 L561 253.6 L560 251.4 L559 254.8 L558 253.6 L557 253.3 L556 252.5 L555 252.7 L554 254.1 L553 253 L552 252.1 L551 251.9 L550 255.5 L549 255.5 L548 254.3 L547 254.9 L546 254.6 L545 254 L544 252.1 L543 252.4 L542 253.5 L541 254.4 L540 255.6 L539 255.2 L538 255.7 L537 253.5 L536 254.5 L535 254.1 L534 252.3 L533 253.8 L532 252 L531 252.2 L530 253.7 L529 252.4 L528 253.3 L527 252.8 L526 254.7 L525 253.2 L524 251.9 L523 253.4 L522 254.5 L521 251.9 L520 252.1 L519 252.6 L518 253.3 L517 251.7 L516 253.5 L515 254.7 L514 251.8 L513 251.4 L512 253.1 L511 252 L510 253 L509 253.4 L508 254.4 L507 254.7 L506 253.7 L505 251.6 L504 252.2 L503 252.4 L502 254.3 L501 252.7 L500 251.8 L499 253.4 L498 253.8 L497 254.8 L496 254.3 L495 255.6 L494 256 L493 254.6 L492 253.2 L491 252.1 L490 253.4 L489 254.3 L488 252.2 L487 255.4 L486 255.8 L485 253.3 L484 252.8 L483 255.1 L482 252.7 L481 254 L480 252.6 L479 254.5 L478 255.6 L477 252.9 L476 252.9 L475 253.3 L474 252.7 L473 252.7 L472 255.6 L471 254 L470 255.9 L469 253.2 L468 252.1 L467 255.1 L466 254.9 L465 252.7 L464 252.7 L463 252.1 L462 254 L461 252.5 L460 251.5 L459 251.3 L458 253.9 L457 251.1 L456 252 L455 251.6 L454 254.4 L453 252 L452 251.1 L451 252.7 L450 251.2 L449 253.2 L448 251.5 L447 251.4 L446 253.9 L445 253.5 L444 254.7 L443 254.1 L442 253.1 L441 253.5 L440 253.2 L439 252.3 L438 251.7 L437 252.3 L436 251.7 L435 251.7 L434 253.6 L433 251.9 L432 251.9 L431 252.7 L430 254.7 L429 252.7 L428 252.4 L427 253.3 L426 255.5 L425 254.1 L424 253.9 L423 253.7 L422 252.5 L421 254 L420 253.7 L419 252.8 L418 253.6 L417 253.5 L416 255.6 L415 251.8 L414 252.9 L413 251.8 L412 251.7 L411 251.7 L410 253 L409 251.6 L408 252.4 L407 255.1 L406 251.4 L405 254 L404 251.3 L403 252.4 L402 254.5 L401 251.7 L400 253.5 L399 251.8 L398 251.9 L397 254.5 L396 251.2 L395 251.1 L394 251.4 L393 253.2 L392 253.2 L391 254.4 L390 253.2 L389 254.4 L388 254.4 L387 252.6 L386 251.9 L385 252 L384 251.6 L383 252.4 L382 251.7 L381 251.6 L380 252.7 L379 254.8 L378 251.6 L377 253.1 L376 251.7 L375 251.7 L374 252.9 L373 253.7 L372 253.5 L371 253.2 L370 254.1 L369 252.2 L368 252.9 L367 252.9 L366 253 L365 252.2 L364 254.3 L363 252.2 L362 254.3 L361 252.2 L360 254.5 L359 254.8 L358 253.3 L357 252.4 L356 252 L355 254 L354 253.9 L353 252 L352 252.6 L351 251.8 L350 254.1 L349 253.1 L348 253.4 L347 254.6 L346 253.3 L345 253.5 L344 252.2 L343 252.6 L342 251.9 L341 251.4 L340 253.5 L339 251.2 L338 252.1 L337 251.1 L336 251.4 L335 252.9 L334 254.2 L333 251.3 L332 254.4 L331 251.6 L330 251.2 L329 254.8 L328 253.6 L327 253.4 L326 254.1 L325 251.4 L324 253.2 L323 252.3 L322 253.2 L321 251.8 L320 254.3 L319 252.9 L318 254.7 L317 254.7 L316 252.2 L315 252.9 L314 255.3 L313 254 L312 253.8 L311 254.8 L310 253.7 L309 255.5 L308 252.6 L307 254 L306 253 L305 253.7 L304 252.9 L303 252.7 L302 252.1 L301 253.9 L300 253.3 L299 252.6 L298 252.1 L297 252.3 L296 255.2 L295 253.3 L294 254.6 L293 252.3 L292 253.5 L291 252.9 L290 252.9 L289 252.2 L288 252.8 L287 251.9 L286 254.5 L285 252.2 L284 251.9 L283 252.3 L282 254.2 L281 251.4 L280 252.8 L279 251.1 L278 252 L277 254.5 L276 252.8 L275 251.4 L274 253.1 L273 252.3 L272 254.5 L271 252 L270 251.4 L269 251.3 L268 254.1 L267 252.5 L266 252.5 L265 254.7 L264 253.3 L263 252.6 L262 251.6 L261 252 L260 251.9 L259 252.2 L258 251.8 L257 254.2 L256 254 L255 252.2 L254 254.4 L253 254.7 L252 253.2 L251 253.9 L250 252.3 L249 254.5 L248 253.5 L247 255.1 L246 253.7 L245 255.7 L244 254.3 L243 255 L242 254.9 L241 254 L240 254.7 L239 254.7 L238 254 L237 253.4 L236 253.5 L235 255.1 L234 253.8 L233 252.9 L232 253.8 L231 254 L230 253.6 L229 254 L228 254.3 L227 251.9 L226 252.1 L225 253.1 L224 254.6 L223 251.4 L222 251.8 L221 253.4 L220 252.3 L219 253.9 L218 252.3 L217 253.9 L216 252.3 L215 253.7 L214 254.5 L213 251.4 L212 252.6 L211 254.5 L210 252.4 L209 254.2 L208 251.9 L207 253 L206 251.5 L205 255.2 L204 251.8 L203 252 L202 252.5 L201 255.1 L200 255.2 L199 252.7 L198 255.4 L197 255.5Z" fill="#efefef"/>
<path d="M664.5 234.8 L665.5 244.2 L666.5 244.2 L667.5 244 L668.5 244 L669.5 244 L670.5 243.9 L671.5 243.9 L672.5 243.9 L673.5 244 L674.5 243.9 L675.5 244.2 L676.5 244.2 L677.5 243.8 L678.5 243.8 L679.5 244.1 L680.5 243.9 L681.5 244.2 L682.5 244.2 L683.5 243.8 L684.5 243.9 L685.5 244.1 L686.5 244 L687.5 244.2 L688.5 243.8 L689.5 243.9 L690.5 244.2 L691.5 243.9 L692.5 243.9 L693.5 243.9 L694.5 237.1 L695.5 236.5 L696.5 235.2 L697.5 235.7 L698.5 234.4 L699.5 234.2 L700.5 234.6 L701.5 237.4 L702.5 238.4 L703.5 239.5 L704.5 237.6 L705.5 238.1 L706.5 237.2 L707.5 237.1 L708.5 236.3 L709.5 238.1 L710.5 234.7 L711.5 233.7 L712.5 235.6 L713.5 235.1 L714.5 234.1 L715.5 234.4 L716.5 233.7 L717.5 234.1 L718.5 234.5 L719.5 235.3 L720.5 235 L721.5 236.9 L722.5 238.8 L723.5 233.4 L724.5 233.1 L725.5 233.7 L726.5 235.3 L727.5 234 L728.5 234.9 L729.5 236.7 L730.5 235.5 L731.5 235.3 L732.5 236.1 L733.5 237.9 L734.5 235.6 L735.5 235 L736.5 235.3 L737.5 238.8 L738.5 234.4 L739.5 237.2 L740.5 235.8 L741.5 237.7 L742.5 234.8 L743.5 236.6 L744.5 235.2 L745.5 237.4 L746.5 236.4 L747.5 236.1 L748.5 235.2 L749.5 234.6 L750.5 238.4 L751.5 238.7 L752.5 236 L753.5 234.4 L754.5 234.8 L755.5 237.7 L756.5 238.2 L757.5 237.2 L758.5 236.5 L759.5 237.7 L760.5 239 L761.5 240.2 L762.5 237.4 L763.5 237.7 L764.5 239.7 L765.5 238.2 L766.5 238.3 L767.5 241 L768.5 242 L769.5 240.4 L770.5 242.1 L771.5 241.1 L772.5 241.2 L773.5 241.9 L774.5 242.7 L775.5 242.2 L776.5 242.6 L777.5 243.6 L778.5 243.2 L779.5 243.5 L780.5 244.2 L781.5 244.2 L782.5 244.2 L783.5 244.2 L784.5 244.3 L785.5 244.3 L786.5 244.2 L787.5 244.2 L788.5 244.4 L789.5 244.2 L789.5 245.3 L788.5 245.2 L787.5 245.1 L786.5 245.2 L785.5 245.2 L784.5 245.1 L783.5 245.1 L782.5 245.2 L781.5 245.4 L780.5 245.4 L779.5 246 L778.5 246.5 L777.5 246.7 L776.5 246.9 L775.5 247.2 L774.5 247.5 L773.5 247.7 L772.5 247.5 L771.5 248.3 L770.5 249 L769.5 249.5 L768.5 249 L767.5 250.5 L766.5 250.9 L765.5 251.3 L764.5 251 L763.5 250.6 L762.5 252.1 L761.5 252.4 L760.5 252.7 L759.5 252.7 L758.5 252.9 L757.5 252.8 L756.5 253.6 L755.5 254.2 L754.5 254.5 L753.5 255 L752.5 255.8 L751.5 254.8 L750.5 255.2 L749.5 255.1 L748.5 254.7 L747.5 253.4 L746.5 252.3 L745.5 252.9 L744.5 251.7 L743.5 252.4 L742.5 254.8 L741.5 255 L740.5 254.5 L739.5 251.4 L738.5 252.7 L737.5 254.4 L736.5 251.7 L735.5 254.1 L734.5 253.9 L733.5 254.7 L732.5 254.8 L731.5 254.6 L730.5 252.2 L729.5 253 L728.5 254.6 L727.5 256.2 L726.5 256.1 L725.5 252.3 L724.5 256.5 L723.5 255.9 L722.5 255.9 L721.5 256.3 L720.5 254.5 L719.5 253.2 L718.5 252.8 L717.5 252.9 L716.5 252.3 L715.5 255.7 L714.5 253.7 L713.5 253.7 L712.5 255.1 L711.5 253.7 L710.5 251.1 L709.5 253.8 L708.5 252.2 L707.5 251.4 L706.5 252.1 L705.5 254 L704.5 250.4 L703.5 253.3 L702.5 254.2 L701.5 254.6 L700.5 253.6 L699.5 255.3 L698.5 254.7 L697.5 255 L696.5 254.6 L695.5 255.1 L694.5 254.3 L693.5 245.6 L692.5 245.5 L691.5 245.3 L690.5 245.4 L689.5 245.7 L688.5 245.6 L687.5 245.6 L686.5 245.6 L685.5 245.6 L684.5 245.7 L683.5 245.6 L682.5 245.3 L681.5 245.6 L680.5 245.5 L679.5 245.6 L678.5 245.6 L677.5 245.4 L676.5 245.4 L675.5 245.6 L674.5 245.7 L673.5 245.5 L672.5 245.3 L671.5 245.6 L670.5 245.4 L669.5 245.4 L668.5 245.5 L667.5 245.5 L666.5 245.2 L665.5 245.5 L664.5 251.3Z" fill="#efefef"/>
<rect x="370.5" y="62" width="1.1" height="242.5" fill="#b8b8b8"/>
<path d="M366 61.4H376L371 69.4Z" fill="#fff"/>
<path d="M215.3 335.5V383.8M225 335.5V383.8M234.6 335.5V383.8M244.3 335.5V383.8M253.9 335.5V383.8M263.6 335.5V383.8M215.3 335.5H263.6M215.3 345.2H263.6M215.3 354.8H263.6M215.3 364.5H263.6M215.3 374.1H263.6M215.3 383.8H263.6" stroke="#8a8a8a" stroke-width="1" fill="none"/>
<rect x="215.3" y="338.5" width="48.3" height="3.6" fill="#8a8a8a"/>
<circle cx="215.3" cy="340.3" r="3.6" fill="#8a8a8a"/>
<circle cx="253.9" cy="340.3" r="3.6" fill="#8a8a8a"/>
<circle cx="263.6" cy="340.3" r="3.6" fill="#8a8a8a"/>
<circle cx="244.3" cy="350" r="3.6" fill="#8a8a8a"/>
<circle cx="225" cy="359.6" r="3.6" fill="#8a8a8a"/>
<circle cx="234.6" cy="359.6" r="3.6" fill="#8a8a8a"/>
<text x="215.3" y="391.8" font-size="7" fill="#8a8a8a" text-anchor="middle">1</text>
<text x="225" y="391.8" font-size="7" fill="#8a8a8a" text-anchor="middle">3</text>
<text x="234.6" y="391.8" font-size="7" fill="#8a8a8a" text-anchor="middle">4</text>
<text x="244.3" y="391.8" font-size="7" fill="#8a8a8a" text-anchor="middle">2</text>
<text x="253.9" y="391.8" font-size="7" fill="#8a8a8a" text-anchor="middle">1</text>
<text x="263.6" y="391.8" font-size="7" fill="#8a8a8a" text-anchor="middle">1</text>
<path d="M377.5 330.8V395.6M390.5 330.8V395.6M403.4 330.8V395.6M416.4 330.8V395.6M429.3 330.8V395.6M442.3 330.8V395.6M377.5 330.8H442.3M377.5 343.8H442.3M377.5 356.7H442.3M377.5 369.7H442.3M377.5 382.6H442.3M377.5 395.6H442.3" stroke="#efefef" stroke-width="1.3" fill="none"/>
<rect x="376.9" y="324.6" width="66.1" height="6.2" fill="#efefef"/>
<rect x="377.5" y="348.1" width="64.8" height="4.2" fill="#efefef"/>
<circle cx="377.5" cy="350.2" r="5" fill="#efefef"/>
<circle cx="429.3" cy="350.2" r="5" fill="#efefef"/>
<circle cx="442.3" cy="350.2" r="5" fill="#efefef"/>
<circle cx="416.4" cy="363.2" r="5" fill="#efefef"/>
<circle cx="390.5" cy="376.2" r="5" fill="#efefef"/>
<circle cx="403.4" cy="376.2" r="5" fill="#efefef"/>
<text x="377.5" y="404.3" font-size="8.5" fill="#efefef" text-anchor="middle">1</text>
<text x="390.5" y="404.3" font-size="8.5" fill="#efefef" text-anchor="middle">4</text>
<text x="403.4" y="404.3" font-size="8.5" fill="#efefef" text-anchor="middle">4</text>
<text x="416.4" y="404.3" font-size="8.5" fill="#efefef" text-anchor="middle">2</text>
<text x="429.3" y="404.3" font-size="8.5" fill="#efefef" text-anchor="middle">4</text>
<text x="442.3" y="404.3" font-size="8.5" fill="#efefef" text-anchor="middle">1</text>
<path d="M554.9 335.8V384.2M564.6 335.8V384.2M574.3 335.8V384.2M583.9 335.8V384.2M593.6 335.8V384.2M603.3 335.8V384.2M554.9 335.8H603.3M554.9 345.5H603.3M554.9 355.2H603.3M554.9 364.8H603.3M554.9 374.5H603.3M554.9 384.2H603.3" stroke="#e0e0e0" stroke-width="1.1" fill="none"/>
<rect x="554.4" y="331.1" width="49.5" height="4.7" fill="#e0e0e0"/>
<circle cx="583.9" cy="340.6" r="3.6" fill="#e0e0e0"/>
<circle cx="603.3" cy="350.3" r="3.6" fill="#e0e0e0"/>
<text x="583.9" y="391.6" font-size="8" fill="#e0e0e0" text-anchor="middle">1</text>
<text x="603.3" y="391.6" font-size="8" fill="#e0e0e0" text-anchor="middle">2</text>
<path d="M551.7 322.4L558.1 328.8M558.1 322.4L551.7 328.8M561.7 322.4L568.1 328.8M568.1 322.4L561.7 328.8M571.6 322.4L578 328.8M578 322.4L571.6 328.8" stroke="#e6e6e6" stroke-width="1.2"/>
<circle cx="593.9" cy="325.6" r="3" fill="none" stroke="#e6e6e6" stroke-width="1.1"/>
<rect x="390.5" y="374.2" width="13" height="4" fill="#efefef"/>
</svg>
<!-- header -->
<div class="a" style="left:15px;top:14px;width:24px;height:23.3px;background:#2b2b2b;border-radius:5px"></div>
<svg class="a" style="left:15px;top:14px" width="24" height="24" viewBox="0 0 24 24"><path d="M16.7 11.9H8M12.1 7.6L7.7 11.9L12.1 16.2" stroke="#fff" stroke-width="1.4" fill="none" stroke-linecap="round" stroke-linejoin="round"/></svg>
<div class="a" style="left:46px;top:20.4px;color:#fff;font-weight:bold;font-size:10px;line-height:11px;letter-spacing:0.22px;white-space:nowrap">Stefan en Lisette.mp3</div>
<div class="a" style="left:139.4px;top:47.6px;color:#9a9a9a;font-size:7px;line-height:8px">2:07</div>
<div class="a" style="left:785px;top:47.6px;color:#9a9a9a;font-size:7px;line-height:8px">7:05</div>
<div class="btn" style="left:17.5px;top:82.0px;width:23px">M</div>
<div class="btn" style="left:43px;top:82.0px;width:20.5px">S</div>
<div class="lbl" style="top:86.8px">Drums</div>
<div class="sl" style="top:108.0px;background:linear-gradient(90deg,#6036c8 0,#6036c8 85px,#21173c 85px)"></div>
<div class="th" style="top:105.7px;background:#7a48f4"></div>
<div class="btn" style="left:17.5px;top:118.3px;width:23px">M</div>
<div class="btn" style="left:43px;top:118.3px;width:20.5px">S</div>
<div class="lbl" style="top:123.1px">Vocals</div>
<div class="sl" style="top:144.3px;background:linear-gradient(90deg,#6036c8 0,#6036c8 85px,#21173c 85px)"></div>
<div class="th" style="top:142.0px;background:#7a48f4"></div>
<div class="btn" style="left:17.5px;top:154.6px;width:23px">M</div>
<div class="btn" style="left:43px;top:154.6px;width:20.5px">S</div>
<div class="lbl" style="top:159.4px">Bass</div>
<div class="sl" style="top:180.6px;background:linear-gradient(90deg,#6036c8 0,#6036c8 85px,#21173c 85px)"></div>
<div class="th" style="top:178.29999999999998px;background:#7a48f4"></div>
<div class="btn" style="left:17.5px;top:190.9px;width:23px">M</div>
<div class="btn" style="left:43px;top:190.9px;width:20.5px">S</div>
<div class="lbl" style="top:195.7px">Music</div>
<div class="sl" style="top:216.9px;background:linear-gradient(90deg,#6036c8 0,#6036c8 85px,#21173c 85px)"></div>
<div class="th" style="top:214.6px;background:#7a48f4"></div>
<div class="btn" style="left:17.5px;top:227.2px;width:23px">M</div>
<div class="btn" style="left:43px;top:227.2px;width:20.5px">S</div>
<div class="lbl" style="top:232.0px">Guitar</div>
<div class="sl" style="top:253.2px;background:linear-gradient(90deg,#6036c8 0,#6036c8 85px,#21173c 85px)"></div>
<div class="th" style="top:250.89999999999998px;background:#7a48f4"></div>
<div class="btn" style="left:17.5px;top:266.3px;width:23px;height:18.3px;color:#fff;font-weight:bold">M</div>
<div class="btn" style="left:43px;top:266.3px;width:20.5px;height:18.3px;color:#444">S</div>
<div class="lbl" style="top:271.1px">Metronome</div>
<div class="sl" style="top:292px;background:linear-gradient(90deg,#5f9e5f 0,#5f9e5f 85px,#2e2e2e 85px)"></div>
<div class="th" style="top:289.7px;background:#6fae6f"></div>

<!-- toolbar -->
<div class="tb" style="left:524.2px;width:37.6px;background:#fff"></div>
<svg class="a" style="left:524px;top:14px" width="38" height="23" viewBox="0 0 38 23">
<path d="M7.1 8.4H13.4M7.1 11.45H13.4M7.1 14.4H10.8" stroke="#111" stroke-width="1.3" stroke-linecap="round"/>
<path d="M15.8 15V8.6Q15.9 7.9 16.8 7.8L18.6 7.6" stroke="#111" stroke-width="1.2" fill="none"/>
<path d="M16 7.6Q17.5 6.9 18.9 7.1L18.8 8.7Q17.3 8.6 16 9.2Z" fill="#111"/>
<ellipse cx="14.1" cy="15.3" rx="1.9" ry="1.5" fill="#111" transform="rotate(-20 14.1 15.3)"/>
<path d="M25.3 11.1H29.1L27.2 13Z" fill="#444"/>
</svg>
<div class="tb" style="left:566.5px;width:35px"></div>
<svg class="a" style="left:566px;top:14px" width="36" height="23" viewBox="0 0 36 23">
<text x="11.3" y="10.6" font-size="6.4" font-weight="bold" fill="#eee" font-family="Liberation Sans" text-anchor="middle">1</text>
<text x="11.8" y="17.7" font-size="6.4" font-weight="bold" fill="#eee" font-family="Liberation Sans" text-anchor="middle">2</text>
<text x="17.2" y="15.2" font-size="8.8" font-weight="bold" fill="#eee" font-family="Liberation Sans" text-anchor="middle">3</text>
<path d="M23.2 11.1H27L25.1 13Z" fill="#aaa"/>
</svg>
<div class="tb" style="left:606.3px;width:56.4px"></div>
<svg class="a" style="left:606px;top:14px" width="57" height="23" viewBox="0 0 57 23">
<path d="M12.3 16.5L15 7.3H18L20.8 16.5Z" stroke="#ddd" stroke-width="0.9" fill="none" stroke-linejoin="round"/>
<path d="M15.7 14.5L21.5 7.8" stroke="#ddd" stroke-width="0.9"/>
<path d="M12 16.7H21" stroke="#ddd" stroke-width="1"/>
<path d="M42.5 11.3H46.5L44.5 13.3Z" fill="#aaa"/>
</svg>
<div class="a" style="left:632.3px;top:21.5px;color:#fff;font-weight:bold;font-size:7.2px;line-height:8px">139</div>
<div class="tb" style="left:668px;width:57.5px"></div>
<svg class="a" style="left:668px;top:14px" width="58" height="23" viewBox="0 0 58 23">
<path d="M10 7.3H22M10 9.5H22M10 11.7H22M10 13.9H22M10 16.1H22" stroke="#aaa" stroke-width="0.6"/>
<path d="M11.6 18.5Q10 15 10.5 12.8Q11.5 10.6 13 9Q14.2 7.3 13.6 5.5Q12.3 6 11.9 8.2L12.6 18.5" stroke="#e8e8e8" stroke-width="1" fill="none"/>
<path d="M12.8 16.3Q9.3 16.5 9.4 13.8Q9.7 11.6 12.4 11.4Q14.6 11.6 14.5 13.7Q14.2 15.2 12.6 15.1" stroke="#e8e8e8" stroke-width="0.9" fill="none"/>
<circle cx="11.3" cy="18.3" r="1" fill="#e8e8e8"/>
<path d="M43.3 11.3H47.3L45.3 13.3Z" fill="#aaa"/>
</svg>
<div class="a" style="left:694.5px;top:21.5px;color:#fff;font-weight:bold;font-size:7.2px;line-height:8px">GB</div>
<div class="tb" style="left:730.5px;width:59.6px;background:#f4e44b"></div>
<svg class="a" style="left:730px;top:14px" width="60" height="23" viewBox="0 0 60 23">
<path d="M13.3 6.8V14.2M10.6 11.7L13.3 14.4L16 11.7" stroke="#111" stroke-width="1.2" fill="none" stroke-linecap="round" stroke-linejoin="round"/>
<path d="M9.1 14.6V16.3H17.6V14.6" stroke="#111" stroke-width="1.2" fill="none" stroke-linecap="round" stroke-linejoin="round"/>
</svg>
<div class="a" style="left:754px;top:22px;color:#111;font-weight:bold;font-size:7.1px;line-height:8px">EXPORT</div>
<svg class="a" style="left:794px;top:18px" width="10" height="16" viewBox="0 0 10 16"><circle cx="4.7" cy="3.5" r="1.4" fill="#fff"/><circle cx="4.7" cy="8.1" r="1.4" fill="#fff"/><circle cx="4.7" cy="12.7" r="1.4" fill="#fff"/></svg>

<!-- popup -->
<div class="a" style="left:449.4px;top:40.3px;width:187.4px;height:167px;background:#282828;border-radius:13px"></div>
<div class="a" style="left:468.2px;top:65.8px;color:#fff;font-weight:bold;font-size:8.2px;line-height:9px;white-space:nowrap">CHORDS (BETA)</div>
<div class="a" style="left:468.2px;top:79.1px;color:#a8a8a8;font-size:7px;line-height:8px;white-space:nowrap">HIDE / SHOW CHORDS VIEW</div>
<div class="a" style="left:592px;top:66px;width:19.2px;height:19.1px;background:#4a8fe6;border-radius:3px"></div>
<svg class="a" style="left:592px;top:66px" width="19" height="19" viewBox="0 0 19 19"><path d="M7 9.8L8.8 11.4L12 8" stroke="#fff" stroke-width="1.3" fill="none" stroke-linecap="round" stroke-linejoin="round"/></svg>
<div class="a" style="left:467.9px;top:103.9px;width:150.8px;height:20px;border:1px solid #8e8e8e;border-radius:4px;background:#282828"></div>
<div class="a" style="left:467.9px;top:103.9px;width:76px;height:20px;background:#fff;border-radius:4px 0 0 4px"></div>
<div class="a" style="left:486.6px;top:110.3px;color:#5d6a78;font-weight:bold;font-size:7px;line-height:8px">ADVANCED</div>
<div class="a" style="left:571.3px;top:110.1px;color:#fff;font-weight:bold;font-size:7.3px;line-height:8px">EASY</div>
<div class="a" style="left:468px;top:136.2px;color:#9c9c9c;font-size:7px;line-height:8.9px;white-space:nowrap">Piano will be avalaible in upcoming version.<br>Please share your feedback with us.</div>
<div class="a" style="left:467.9px;top:160.4px;width:152.9px;height:29px;border:1px solid #8a8a8a;border-radius:4px"></div>
<div class="a" style="left:546.6px;top:160.9px;width:1px;height:28px;background:#6a6a6a"></div>
<svg class="a" style="left:485px;top:167px" width="12" height="15" viewBox="0 0 12 15">
<path d="M7.2 2.4Q9 1.9 9.9 3Q9.8 5.2 8.9 7.6Q9.9 9.6 8.7 11.5Q7.5 13.3 5.5 13.4Q4.5 12.5 4.8 10.6Q5.1 8.4 5.8 6.2Z" fill="#fff"/>
<circle cx="5.5" cy="2.7" r="0.6" fill="#ddd"/><circle cx="4.8" cy="4.3" r="0.6" fill="#ddd"/><circle cx="4.1" cy="5.9" r="0.6" fill="#ddd"/><circle cx="3.4" cy="7.6" r="0.6" fill="#ddd"/><circle cx="2.8" cy="9.3" r="0.6" fill="#ddd"/>
</svg>
<div class="a" style="left:499.3px;top:170.6px;color:#fff;font-weight:bold;font-size:8.2px;line-height:9px">GUITAR</div>
<svg class="a" style="left:564px;top:169px" width="11" height="11" viewBox="0 0 11 11">
<rect x="1.3" y="1.3" width="8.6" height="8.3" fill="none" stroke="#8a8a8a" stroke-width="0.9"/>
<path d="M3.9 1.3V9.6M5.6 1.3V9.6M7.3 1.3V9.6" stroke="#8a8a8a" stroke-width="0.6"/>
<path d="M3.1 1.5V6.2M4.8 1.5V6.2M6.5 1.5V6.2M8.1 1.5V6.2" stroke="#8a8a8a" stroke-width="1.1"/>
</svg>
<div class="a" style="left:577.8px;top:170.6px;color:#8c8c8c;font-weight:bold;font-size:8.2px;line-height:9px">PIANO</div>

<!-- chord labels -->
<div class="a" style="left:231px;top:400px;color:#8c8c8c;font-weight:bold;font-size:8.6px;line-height:9px">G#</div>
<div class="a" style="left:398.5px;top:417.2px;color:#fff;font-weight:bold;font-size:13.3px;line-height:14px;letter-spacing:1.4px">F#</div>
<div class="a" style="left:563.8px;top:399.6px;color:#dcdcdc;font-weight:bold;font-size:9.5px;line-height:10px">Abm7</div>

<!-- transport -->
<svg class="a" style="left:300px;top:456px" width="20" height="18" viewBox="0 0 20 18">
<path d="M4.3 6.8H6.5L9.9 4.5V13.6L6.5 11.3H4.3Z" stroke="#c8c8c8" stroke-width="0.9" fill="none" stroke-linejoin="round"/>
<path d="M11.7 7.2Q12.8 9 11.7 10.8M13.3 5.9Q15.3 9 13.3 12.1" stroke="#c8c8c8" stroke-width="0.9" fill="none"/>
</svg>
<svg class="a" style="left:348px;top:459px" width="16" height="13" viewBox="0 0 16 13"><path d="M2.3 6.5L7.8 2.5V10.5ZM7.8 6.5L13.3 2.5V10.5Z" fill="#fff"/></svg>
<div class="a" style="left:388.9px;top:447.7px;width:37.2px;height:35px;background:#262626;border-radius:4px"></div>
<svg class="a" style="left:398px;top:455px" width="20" height="20" viewBox="0 0 20 20"><path d="M5.9 5.8L14.8 10.3L5.9 14.9Z" fill="#fff"/></svg>
<svg class="a" style="left:451px;top:459px" width="16" height="13" viewBox="0 0 16 13"><path d="M2.8 2.5L8.3 6.5L2.8 10.5ZM8.3 2.5L13.8 6.5L8.3 10.5Z" fill="#fff"/></svg>
<svg class="a" style="left:498px;top:458px" width="16" height="16" viewBox="0 0 16 16">
<path d="M3.6 7.4Q4.2 3.4 8.2 3.2Q10.6 3.2 12 5.2M12.6 8.6Q12 12.6 8 12.8Q5.6 12.8 4.2 10.8" stroke="#b0b0b0" stroke-width="1" fill="none"/>
<path d="M12.6 2.8V5.8H9.6M3.6 13.2V10.2H6.6" stroke="#b0b0b0" stroke-width="1" fill="none"/>
</svg>
<div class="a" style="left:207.1px;top:490.3px;width:401.1px;height:2.3px;background:#464629;border-radius:1.2px"></div>
<div class="a" style="left:207.1px;top:490.1px;width:119.5px;height:2.6px;background:#f1e85c;border-radius:1.3px"></div>
<div class="a" style="left:323.3px;top:488.2px;width:6.9px;height:6.9px;background:#f1e85c;border-radius:50%"></div>
<div class="a" style="left:614.5px;top:488px;color:#8a8a8a;font-size:7px;line-height:8px">7:05</div>
<!-- watermark -->
<div class="a" style="left:185.5px;top:487.3px;color:#8a8a8a;font-size:7px;line-height:8px">2:07</div>
<div class="a" style="left:22.2px;top:473.2px;width:196px;height:24.6px;background:rgba(13,41,88,0.9);border-radius:1.5px"></div>
<svg class="a" style="left:31px;top:476px" width="20" height="18" viewBox="0 0 20 18">
<path d="M1.7 3.4 L5.0 1.7 L4.8 5.1ZM6.9 2.3 L10.8 3.6 L7.3 6.0ZM15.5 2.5 L17.0 9.9 L11.2 7.0ZM2.8 7.9 L8.4 10.9 L4.1 15.0ZM13.4 10.5 L13.6 13.1 L11.2 12.2ZM9.1 14.4 L12.3 15.5 L9.5 17.6Z" fill="#fff" stroke="#fff" stroke-width="0.5" stroke-linejoin="round"/>
</svg>
<div class="a" style="left:53.3px;top:476.2px;color:#fff;font-size:15px;line-height:17px;letter-spacing:-0.3px;-webkit-text-stroke:0.35px #fff;white-space:nowrap">CompleteAiTraining.com</div>

</body></html>
